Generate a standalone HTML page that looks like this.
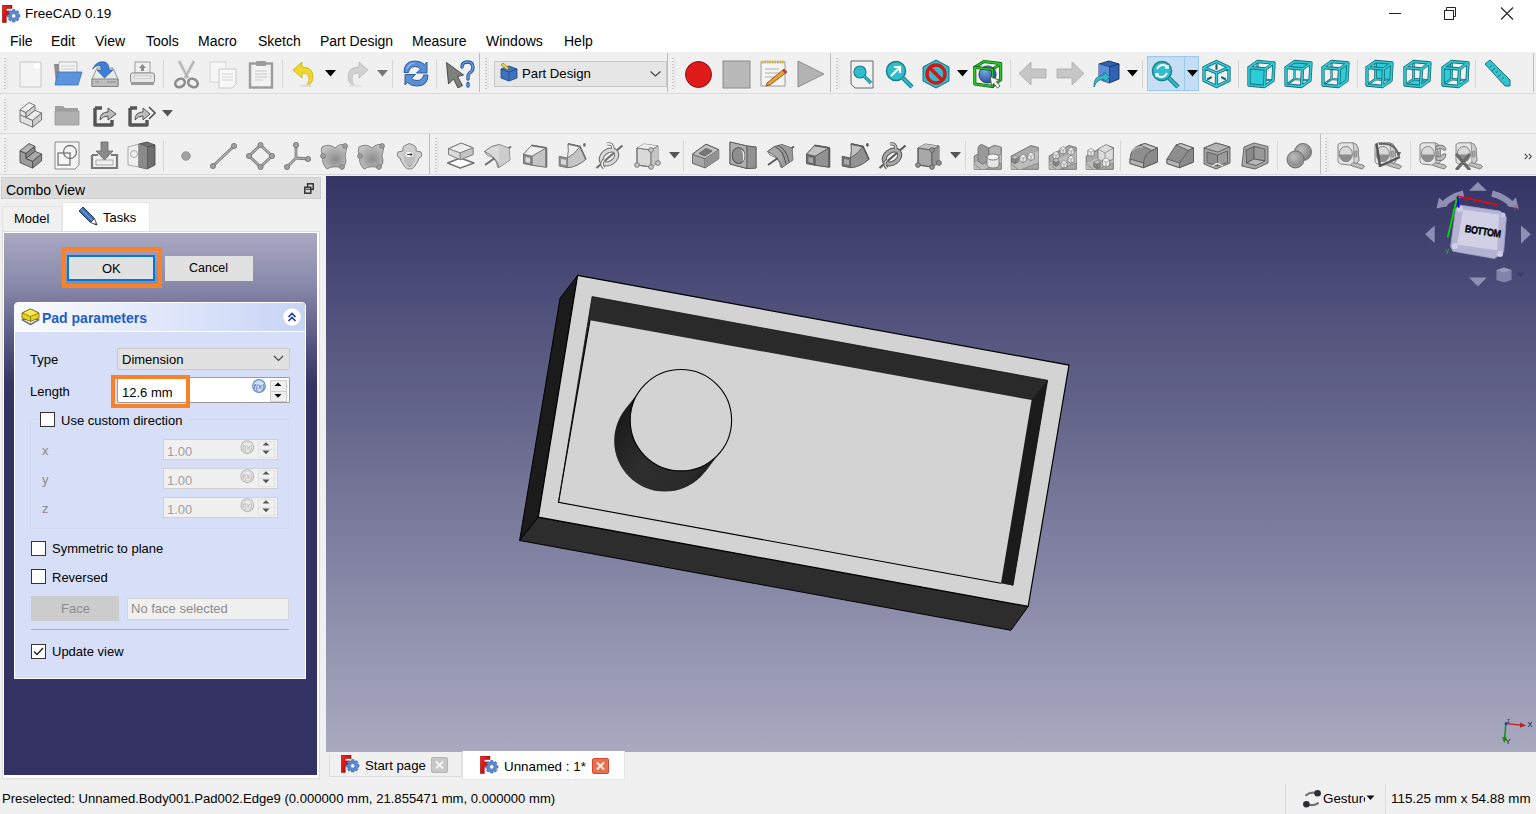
<!DOCTYPE html>
<html><head><meta charset="utf-8">
<style>
*{box-sizing:border-box;margin:0;padding:0}
html,body{width:1536px;height:814px;overflow:hidden;background:#f0f0f0;font-family:"Liberation Sans",sans-serif;color:#000;position:relative}
.a{position:absolute}
.t{position:absolute;white-space:nowrap;line-height:1}
#title{left:0;top:0;width:1536px;height:52px;background:#fff}
#tb{left:0;top:52px;width:1536px;height:123px;background:#f0f0f0}
.tline{position:absolute;left:0;width:1536px;height:1px;background:#dadada}
#view{left:326px;top:176px;width:1210px;height:576px;background:linear-gradient(#353566,#a9aac0)}
#dock{left:0;top:176px;width:322px;height:604px}
</style></head><body>
<div id="title" class="a">
  <div class="t" style="left:25px;top:7.3px;font-size:13.5px">FreeCAD 0.19</div>
  <div class="t" style="left:10px;top:33.7px;font-size:14px">File</div>
  <div class="t" style="left:51px;top:33.7px;font-size:14px">Edit</div>
  <div class="t" style="left:95px;top:33.7px;font-size:14px">View</div>
  <div class="t" style="left:146px;top:33.7px;font-size:14px">Tools</div>
  <div class="t" style="left:198px;top:33.7px;font-size:14px">Macro</div>
  <div class="t" style="left:258px;top:33.7px;font-size:14px">Sketch</div>
  <div class="t" style="left:320px;top:33.7px;font-size:14px">Part Design</div>
  <div class="t" style="left:412px;top:33.7px;font-size:14px">Measure</div>
  <div class="t" style="left:486px;top:33.7px;font-size:14px">Windows</div>
  <div class="t" style="left:564px;top:33.7px;font-size:14px">Help</div>
</div>
<div id="tb" class="a">
  <div class="tline" style="top:41px"></div>
  <div class="tline" style="top:81px"></div>
  <div class="tline" style="top:122px"></div>
</div>
<!--TB-->
<svg class="a" style="left:4px;top:58px" width="4" height="31"><line x1="1" y1="0" x2="1" y2="31" stroke="#9a9a9a" stroke-width="1" stroke-dasharray="1 2"/><line x1="3" y1="1.5" x2="3" y2="31" stroke="#c4c4c4" stroke-width="1" stroke-dasharray="1 2"/></svg>
<svg class="a" style="left:19px;top:61px" width="23" height="27" viewBox="0 0 23 27" preserveAspectRatio="none"><rect x="1" y="1" width="21" height="25" rx="1" fill="#f3f3f3" stroke="#c6c6c6"/><circle cx="18" cy="5" r="3" fill="#fff"/></svg>
<svg class="a" style="left:53px;top:60px" width="30" height="26" viewBox="0 0 30 26" preserveAspectRatio="none"><path d="M1 4 H9 L11 6 H20 V24 H3Z" fill="#8c8c8c"/><path d="M6 2 H24 V20 H6Z" fill="#f4f4f4" stroke="#aaa" stroke-width="0.8"/><path d="M8 6 H22 M8 9 H22" stroke="#ccc"/><path d="M5 12 H29 L25 25 H2Z" fill="#5c93dd" stroke="#3d6fb8" stroke-width="0.8"/></svg>
<svg class="a" style="left:91px;top:60px" width="28" height="28" viewBox="0 0 28 28" preserveAspectRatio="none"><path d="M6 8 H22 L27 19 V26 H1 V19Z" fill="#e9e9e9" stroke="#8a8a8a" stroke-width="0.9"/><path d="M1 19 H27 V26.5 H1Z" fill="#bdbdbd" stroke="#7a7a7a" stroke-width="0.9"/><path d="M16 22 H25 M4 22 H8" stroke="#8a8a8a" stroke-width="1"/><path d="M1.5 9 Q6 0 14 2 Q18 3.5 18 10 H22 L13.5 18 L6 10 H10.5 Q10.5 5.5 7 5.5 Q4 6 1.5 9Z" fill="#3d7ed6" stroke="#24589f" stroke-width="0.7"/></svg>
<svg class="a" style="left:129px;top:60px" width="27" height="27" viewBox="0 0 27 27" preserveAspectRatio="none"><rect x="6" y="2" width="15" height="11" fill="#efefef" stroke="#9c9c9c"/><path d="M13.5 4 L10 8 H12 V11 H15 V8 H17Z" fill="#8e8e8e"/><rect x="1.5" y="13" width="24" height="10" rx="2" fill="#e6e6e6" stroke="#8a8a8a"/><rect x="5" y="16" width="17" height="2" fill="#fff" stroke="#aaa" stroke-width="0.6"/><rect x="2" y="22" width="23" height="3" fill="#9a9a9a"/></svg>
<div class="a" style="left:163px;top:60px;width:1px;height:28px;background:#d6d6d6"></div>
<svg class="a" style="left:173px;top:60px" width="27" height="29" viewBox="0 0 27 29" preserveAspectRatio="none"><path d="M6 1 L15 18 M21 1 L12 18" stroke="#c9c9c9" stroke-width="3"/><path d="M6 1 L15 18 M21 1 L12 18" stroke="#9a9a9a" stroke-width="0.7" fill="none"/><ellipse cx="7" cy="23" rx="5" ry="4" fill="none" stroke="#8c8c8c" stroke-width="2.6" transform="rotate(-30 7 23)"/><ellipse cx="20" cy="23" rx="5" ry="4" fill="none" stroke="#8c8c8c" stroke-width="2.6" transform="rotate(30 20 23)"/></svg>
<svg class="a" style="left:209px;top:60px" width="29" height="29" viewBox="0 0 29 29" preserveAspectRatio="none"><path d="M1 2 H17 V22 H1Z" fill="#f6f6f6" stroke="#d4d4d4"/><path d="M10 9 H27 V24 L23 28 H10Z" fill="#f8f8f8" stroke="#c8c8c8"/><path d="M13 14 H24 M13 17 H24 M13 20 H24" stroke="#d2d2d2"/></svg>
<svg class="a" style="left:248px;top:60px" width="26" height="29" viewBox="0 0 26 29" preserveAspectRatio="none"><rect x="2" y="3.5" width="22" height="24" fill="#f2f2f2" stroke="#9c9c9c" stroke-width="2.4"/><rect x="8" y="1" width="10" height="5" rx="1" fill="#9c9c9c"/><path d="M7 11 H19 M7 14 H19 M7 17 H19 M7 20 H15" stroke="#c8c8c8"/></svg>
<div class="a" style="left:282px;top:60px;width:1px;height:28px;background:#d6d6d6"></div>
<svg class="a" style="left:292px;top:60px" width="24" height="27" viewBox="0 0 24 27" preserveAspectRatio="none"><path d="M1 10 L10 2 V7 Q21 7 21 17 Q21 24 14 26 Q18 22 17 17 Q16 13 10 13 V18Z" fill="#f0d82a" stroke="#c9b110" stroke-width="0.8"/><ellipse cx="14" cy="26" rx="7" ry="1.5" fill="#ddd"/></svg>
<svg class="a" style="left:325px;top:70px" width="11" height="7" viewBox="0 0 11 7" preserveAspectRatio="none"><path d="M0 0 H11 L5.5 6.5Z" fill="#000"/></svg>
<svg class="a" style="left:345px;top:60px" width="24" height="27" viewBox="0 0 24 27" preserveAspectRatio="none"><path d="M23 10 L14 2 V7 Q3 7 3 17 Q3 24 10 26 Q6 22 7 17 Q8 13 14 13 V18Z" fill="#d2d2d2" stroke="#b8b8b8" stroke-width="0.8"/><ellipse cx="10" cy="26" rx="7" ry="1.5" fill="#e2e2e2"/></svg>
<svg class="a" style="left:377px;top:70px" width="11" height="7" viewBox="0 0 11 7" preserveAspectRatio="none"><path d="M0 0 H11 L5.5 6.5Z" fill="#777"/></svg>
<div class="a" style="left:392px;top:60px;width:1px;height:28px;background:#d6d6d6"></div>
<svg class="a" style="left:403px;top:60px" width="26" height="27" viewBox="0 0 26 27" preserveAspectRatio="none"><path d="M1 12.5 Q1 1 12 1 Q18 1 21.5 4.5 L24 2 V13 H13.5 L17.5 9 Q15.5 6.5 12 6.5 Q6.5 6.5 5.5 12.5Z" fill="#5a8fd4" stroke="#22549c" stroke-width="0.9" stroke-linejoin="round"/><path d="M25 15 Q25 26 14 26 Q8 26 4.5 22.5 L2 25 V14.5 H12.5 L8.5 18.5 Q10.5 20.5 14 20.5 Q19.5 20.5 20.5 15Z" fill="#5a8fd4" stroke="#22549c" stroke-width="0.9" stroke-linejoin="round"/><path d="M4 9 Q6 3 12 3" fill="none" stroke="#9cc0ec" stroke-width="1.2"/></svg>
<div class="a" style="left:436px;top:59px;width:1px;height:30px;background:#d6d6d6"></div>
<svg class="a" style="left:445px;top:60px" width="30" height="28" viewBox="0 0 30 28" preserveAspectRatio="none"><path d="M1.5 2.5 L18.5 15 L12.5 16.5 L17.5 25.5 L13 28 L8.5 19 L3.5 24Z" fill="#7e807c" stroke="#3e403c" stroke-width="0.9" stroke-linejoin="round"/><path d="M17 7 Q17 2 22.5 2 Q28 2 28 7.5 Q28 11 24.5 13 Q23 14 23 17 V19" fill="none" stroke="#1f4f9a" stroke-width="3.3" stroke-linecap="round"/><path d="M17 7 Q17 2 22.5 2 Q28 2 28 7.5 Q28 11 24.5 13 Q23 14 23 17 V19" fill="none" stroke="#6a9ad8" stroke-width="1.6" stroke-linecap="round"/><path d="M23 23.5 V26" stroke="#1f4f9a" stroke-width="3.3" stroke-linecap="round"/><path d="M23 23.5 V26" stroke="#6a9ad8" stroke-width="1.5" stroke-linecap="round"/></svg>
<div class="a" style="left:479px;top:53px;width:1px;height:39px;background:#bdbdbd"></div>
<svg class="a" style="left:485px;top:58px" width="4" height="31"><line x1="1" y1="0" x2="1" y2="31" stroke="#9a9a9a" stroke-width="1" stroke-dasharray="1 2"/><line x1="3" y1="1.5" x2="3" y2="31" stroke="#c4c4c4" stroke-width="1" stroke-dasharray="1 2"/></svg>
<div class="a" style="left:494px;top:61px;width:173px;height:26px;background:#e6e6e6;border:1px solid #c7c7c7"></div>
<svg class="a" style="left:499px;top:62px" width="19" height="20" viewBox="0 0 19 20" preserveAspectRatio="none"><path d="M2 7 L10 4 L18 7 V16 L10 19 L2 16Z" fill="#3f73bf" stroke="#20407a" stroke-width="0.8"/><path d="M2 7 L10 10 L18 7" fill="none" stroke="#20407a" stroke-width="0.8"/><path d="M10 10 V19" stroke="#20407a" stroke-width="0.6"/><path d="M4 1 L10 6 L8 8 L2 3Z" fill="#e8d04a" stroke="#7a6a20" stroke-width="0.6"/></svg>
<div class="t" style="left:522px;top:67px;font-size:13.2px">Part Design</div>
<svg class="a" style="left:650px;top:71px" width="11" height="6" viewBox="0 0 11 6" preserveAspectRatio="none"><path d="M0.5 0.5 L5.5 5 L10.5 0.5" fill="none" stroke="#444" stroke-width="1.1"/></svg>
<div class="a" style="left:667px;top:53px;width:1px;height:39px;background:#bdbdbd"></div>
<svg class="a" style="left:672px;top:58px" width="4" height="31"><line x1="1" y1="0" x2="1" y2="31" stroke="#9a9a9a" stroke-width="1" stroke-dasharray="1 2"/><line x1="3" y1="1.5" x2="3" y2="31" stroke="#c4c4c4" stroke-width="1" stroke-dasharray="1 2"/></svg>
<svg class="a" style="left:684px;top:60px" width="29" height="29" viewBox="0 0 29 29" preserveAspectRatio="none"><circle cx="14.5" cy="14.5" r="13" fill="#e01b1b" stroke="#8a0a0a" stroke-width="1"/></svg>
<svg class="a" style="left:722px;top:60px" width="29" height="29" viewBox="0 0 29 29" preserveAspectRatio="none"><rect x="1" y="1" width="27" height="27" fill="#b9b9b9" stroke="#8a8a8a" stroke-width="1"/></svg>
<svg class="a" style="left:759px;top:59px" width="29" height="29" viewBox="0 0 29 29" preserveAspectRatio="none"><rect x="2" y="3" width="24" height="24" fill="#f4f4f4" stroke="#9a9a9a"/><path d="M3 3 H25" stroke="#c9b24a" stroke-width="3" stroke-dasharray="1.5 1"/><path d="M6 10 H20 M6 14 H20 M6 18 H16" stroke="#b0b0b0"/><path d="M8 24 L25 10 L28 13 L11 26 L7 27Z" fill="#e8a030" stroke="#7a4a10" stroke-width="0.8"/><path d="M24 11 L27 14" stroke="#d03030" stroke-width="2"/></svg>
<svg class="a" style="left:797px;top:60px" width="28" height="28" viewBox="0 0 28 28" preserveAspectRatio="none"><path d="M1 1 L27 14 L1 27Z" fill="#b3b3b3" stroke="#8c8c8c" stroke-width="1"/></svg>
<div class="a" style="left:830px;top:53px;width:1px;height:39px;background:#bdbdbd"></div>
<svg class="a" style="left:836px;top:58px" width="4" height="31"><line x1="1" y1="0" x2="1" y2="31" stroke="#9a9a9a" stroke-width="1" stroke-dasharray="1 2"/><line x1="3" y1="1.5" x2="3" y2="31" stroke="#c4c4c4" stroke-width="1" stroke-dasharray="1 2"/></svg>
<svg class="a" style="left:850px;top:60px" width="25" height="30" viewBox="0 0 25 30" preserveAspectRatio="none"><path d="M1 1 H23 V28 H5 L1 24Z" fill="#f2f2f2" stroke="#555" stroke-width="0.9"/><circle cx="10" cy="12" r="6" fill="#2fbccd" stroke="#1a7f8c" stroke-width="1.2"/><path d="M14 16 L21 23" stroke="#1a7f8c" stroke-width="3.2"/><path d="M14 16 L21 23" stroke="#2fbccd" stroke-width="1.6"/></svg>
<svg class="a" style="left:885px;top:60px" width="29" height="29" viewBox="0 0 29 29" preserveAspectRatio="none"><circle cx="11" cy="11" r="9.5" fill="#2fbccd" stroke="#1a7f8c" stroke-width="1.5"/><path d="M18 18 L27 27" stroke="#1a7f8c" stroke-width="4.5"/><path d="M18 18 L27 27" stroke="#2fbccd" stroke-width="2.2"/><path d="M6 16 L14 8 M9 7 H15 V13" fill="none" stroke="#fff" stroke-width="2.2"/></svg>
<svg class="a" style="left:921px;top:59px" width="30" height="30" viewBox="0 0 30 30" preserveAspectRatio="none"><path d="M15 1 L28 8 V22 L15 29 L2 22 V8Z" fill="#2fbccd" stroke="#1a6f7c" stroke-width="1"/><circle cx="15" cy="15" r="9" fill="none" stroke="#d01818" stroke-width="3.4"/><path d="M9 9 L21 21" stroke="#d01818" stroke-width="3.4"/></svg>
<svg class="a" style="left:957px;top:70px" width="11" height="7" viewBox="0 0 11 7" preserveAspectRatio="none"><path d="M0 0 H11 L5.5 6.5Z" fill="#000"/></svg>
<svg class="a" style="left:973px;top:59px" width="30" height="31" viewBox="0 0 30 31" preserveAspectRatio="none"><path d="M1.8 8.3 L10.9 2.4 L27.7 4.6 L27.7 20.5 L19.5 27.4 M19.5 10.5 L27.7 4.6" fill="none" stroke-linejoin="round" stroke-linecap="round" stroke="#0a4a0a" stroke-width="3"/><path d="M1.8 8.3 L10.9 2.4 L27.7 4.6 L27.7 20.5 L19.5 27.4 M19.5 10.5 L27.7 4.6" fill="none" stroke-linejoin="round" stroke-linecap="round" stroke="#22cc22" stroke-width="1.7"/><defs><radialGradient id="bsph" cx="0.35" cy="0.3" r="0.75"><stop offset="0" stop-color="#7aa6e0"/><stop offset="1" stop-color="#1f4f9a"/></radialGradient></defs><circle cx="14.5" cy="15.5" r="8.6" fill="url(#bsph)" stroke="#1a2a4a" stroke-width="0.8"/><path d="M1.8 8.3 L19.5 10.5 L19.5 27.4 L1.8 25.1Z" fill="none" stroke-linejoin="round" stroke-linecap="round" stroke="#0a4a0a" stroke-width="3"/><path d="M1.8 8.3 L19.5 10.5 L19.5 27.4 L1.8 25.1Z" fill="none" stroke-linejoin="round" stroke-linecap="round" stroke="#22cc22" stroke-width="1.7"/><path d="M17.3 17.4 L18.5 27 L20.8 24.5 L24.5 29 L27 27 L23.3 22.6 L26.5 21.5Z" fill="#f6f6f6" stroke="#444" stroke-width="0.8" stroke-linejoin="round"/></svg>
<div class="a" style="left:1010px;top:60px;width:1px;height:28px;background:#d6d6d6"></div>
<svg class="a" style="left:1018px;top:61px" width="30" height="25" viewBox="0 0 30 25" preserveAspectRatio="none"><path d="M1 12.5 L13 1 V8 H28 V17 H13 V24Z" fill="#c6c6c6" stroke="#aaa" stroke-width="0.8"/></svg>
<svg class="a" style="left:1055px;top:61px" width="30" height="25" viewBox="0 0 30 25" preserveAspectRatio="none"><path d="M29 12.5 L17 1 V8 H2 V17 H17 V24Z" fill="#c6c6c6" stroke="#aaa" stroke-width="0.8"/></svg>
<svg class="a" style="left:1091px;top:59px" width="30" height="30" viewBox="0 0 30 30" preserveAspectRatio="none"><path d="M8 5 L18 2 L28 5 V20 L18 24 L8 20Z" fill="#2f63b0" stroke="#102a5a" stroke-width="0.9"/><path d="M8 5 L18 8 L28 5 M18 8 V24" fill="none" stroke="#102a5a" stroke-width="0.8"/><path d="M8 5 L18 8 V24 L8 20Z" fill="#5a8fd8"/><path d="M3 28 Q2 17 13 16 V13 L19 18 L13 23 V20 Q6 20 3 28Z" fill="#2fbccd" stroke="#1a6f7c" stroke-width="0.8"/></svg>
<svg class="a" style="left:1127px;top:70px" width="11" height="7" viewBox="0 0 11 7" preserveAspectRatio="none"><path d="M0 0 H11 L5.5 6.5Z" fill="#000"/></svg>
<div class="a" style="left:1142px;top:60px;width:1px;height:28px;background:#d6d6d6"></div>
<div class="a" style="left:1147px;top:56px;width:52px;height:35px;background:#c6def4;border:1px solid #99c9ef"></div>
<div class="a" style="left:1184px;top:57px;width:1px;height:33px;background:#99c9ef"></div>
<svg class="a" style="left:1151px;top:60px" width="30" height="29" viewBox="0 0 30 29" preserveAspectRatio="none"><circle cx="11" cy="11" r="9.5" fill="#2fbccd" stroke="#1a7f8c" stroke-width="1.5"/><path d="M18 18 L27 27" stroke="#1a7f8c" stroke-width="4.5"/><path d="M18 18 L27 27" stroke="#2fbccd" stroke-width="2.2"/><path d="M6 9 Q8 5 12 5 Q15 5 16 7 M16 13 Q14 17 10 17 Q7 17 6 15" fill="none" stroke="#fff" stroke-width="1.8"/><path d="M14 8 H17 V5 M8 14 H5 V17" fill="none" stroke="#fff" stroke-width="1.4"/></svg>
<svg class="a" style="left:1187px;top:70px" width="11" height="7" viewBox="0 0 11 7" preserveAspectRatio="none"><path d="M0 0 H11 L5.5 6.5Z" fill="#000"/></svg>
<svg class="a" style="left:1202px;top:59px" width="29" height="30" viewBox="0 0 29 30" preserveAspectRatio="none"><path d="M14.5,2.5 L27,8.5 L27,21.5 L14.5,27.5 L2,21.5 L2,8.5Z M14.5,14 L2,8.5 M14.5,14 L27,8.5 M14.5,14 L14.5,27.5" fill="none" stroke="#1a6a74" stroke-width="3.3" stroke-linejoin="round" stroke-linecap="round"/><path d="M14.5,2.5 L27,8.5 L27,21.5 L14.5,27.5 L2,21.5 L2,8.5Z M14.5,14 L2,8.5 M14.5,14 L27,8.5 M14.5,14 L14.5,27.5" fill="none" stroke="#2ccdd9" stroke-width="1.7" stroke-linejoin="round" stroke-linecap="round"/><path d="M14.5 6 V10 M6 20 L9 18.5 M23 20 L20 18.5" stroke="#1a6a74" stroke-width="2.2" stroke-linecap="round"/></svg>
<div class="a" style="left:1238px;top:60px;width:1px;height:28px;background:#d6d6d6"></div>
<svg class="a" style="left:1247px;top:59px" width="29" height="30" viewBox="0 0 29 30" preserveAspectRatio="none"><path d="M10.5,2.5 L10.5,20 L26.0,21.5 M10.5,20 L2,26" fill="none" stroke="#1a6a74" stroke-width="2.2" stroke-linejoin="round" stroke-linecap="round"/><path d="M10.5,2.5 L10.5,20 L26.0,21.5 M10.5,20 L2,26" fill="none" stroke="#2ccdd9" stroke-width="0.9" stroke-linejoin="round" stroke-linecap="round"/><polygon points="2,8.5 18.5,10 17.5,27.5 2,26" fill="#2ccdd9" stroke="#1a6a74" stroke-width="1.2"/><path d="M2,8.5 L18.5,10 L17.5,27.5 L2,26Z M2,8.5 L10.5,2.5 L27.0,4 L18.5,10 M27.0,4 L26.0,21.5 L17.5,27.5" fill="none" stroke="#1a6a74" stroke-width="3.3" stroke-linejoin="round" stroke-linecap="round"/><path d="M2,8.5 L18.5,10 L17.5,27.5 L2,26Z M2,8.5 L10.5,2.5 L27.0,4 L18.5,10 M27.0,4 L26.0,21.5 L17.5,27.5" fill="none" stroke="#2ccdd9" stroke-width="1.7" stroke-linejoin="round" stroke-linecap="round"/></svg>
<svg class="a" style="left:1284px;top:59px" width="29" height="30" viewBox="0 0 29 30" preserveAspectRatio="none"><path d="M10.5,2.5 L10.5,20 L26.0,21.5 M10.5,20 L2,26" fill="none" stroke="#1a6a74" stroke-width="2.2" stroke-linejoin="round" stroke-linecap="round"/><path d="M10.5,2.5 L10.5,20 L26.0,21.5 M10.5,20 L2,26" fill="none" stroke="#2ccdd9" stroke-width="0.9" stroke-linejoin="round" stroke-linecap="round"/><polygon points="2,8.5 10.5,2.5 27.0,4 18.5,10" fill="#2ccdd9" stroke="#1a6a74" stroke-width="1.2"/><path d="M2,8.5 L18.5,10 L17.5,27.5 L2,26Z M2,8.5 L10.5,2.5 L27.0,4 L18.5,10 M27.0,4 L26.0,21.5 L17.5,27.5" fill="none" stroke="#1a6a74" stroke-width="3.3" stroke-linejoin="round" stroke-linecap="round"/><path d="M2,8.5 L18.5,10 L17.5,27.5 L2,26Z M2,8.5 L10.5,2.5 L27.0,4 L18.5,10 M27.0,4 L26.0,21.5 L17.5,27.5" fill="none" stroke="#2ccdd9" stroke-width="1.7" stroke-linejoin="round" stroke-linecap="round"/></svg>
<svg class="a" style="left:1321px;top:59px" width="29" height="30" viewBox="0 0 29 30" preserveAspectRatio="none"><path d="M10.5,2.5 L10.5,20 L26.0,21.5 M10.5,20 L2,26" fill="none" stroke="#1a6a74" stroke-width="2.2" stroke-linejoin="round" stroke-linecap="round"/><path d="M10.5,2.5 L10.5,20 L26.0,21.5 M10.5,20 L2,26" fill="none" stroke="#2ccdd9" stroke-width="0.9" stroke-linejoin="round" stroke-linecap="round"/><polygon points="18.5,10 27.0,4 26.0,21.5 17.5,27.5" fill="#2ccdd9" stroke="#1a6a74" stroke-width="1.2"/><path d="M2,8.5 L18.5,10 L17.5,27.5 L2,26Z M2,8.5 L10.5,2.5 L27.0,4 L18.5,10 M27.0,4 L26.0,21.5 L17.5,27.5" fill="none" stroke="#1a6a74" stroke-width="3.3" stroke-linejoin="round" stroke-linecap="round"/><path d="M2,8.5 L18.5,10 L17.5,27.5 L2,26Z M2,8.5 L10.5,2.5 L27.0,4 L18.5,10 M27.0,4 L26.0,21.5 L17.5,27.5" fill="none" stroke="#2ccdd9" stroke-width="1.7" stroke-linejoin="round" stroke-linecap="round"/></svg>
<div class="a" style="left:1357px;top:60px;width:1px;height:28px;background:#d6d6d6"></div>
<svg class="a" style="left:1365px;top:59px" width="29" height="30" viewBox="0 0 29 30" preserveAspectRatio="none"><polygon points="10.5,2.5 27.0,4 26.0,21.5 10.5,20" fill="#2ccdd9" stroke="#1a6a74" stroke-width="0.8"/><path d="M10.5,2.5 L10.5,20 L26.0,21.5 M10.5,20 L2,26" fill="none" stroke="#1a6a74" stroke-width="2.6" stroke-linejoin="round" stroke-linecap="round"/><path d="M10.5,2.5 L10.5,20 L26.0,21.5 M10.5,20 L2,26" fill="none" stroke="#2ccdd9" stroke-width="1.2" stroke-linejoin="round" stroke-linecap="round"/><path d="M2,8.5 L18.5,10 L17.5,27.5 L2,26Z M2,8.5 L10.5,2.5 L27.0,4 L18.5,10 M27.0,4 L26.0,21.5 L17.5,27.5" fill="none" stroke="#1a6a74" stroke-width="3.3" stroke-linejoin="round" stroke-linecap="round"/><path d="M2,8.5 L18.5,10 L17.5,27.5 L2,26Z M2,8.5 L10.5,2.5 L27.0,4 L18.5,10 M27.0,4 L26.0,21.5 L17.5,27.5" fill="none" stroke="#2ccdd9" stroke-width="1.7" stroke-linejoin="round" stroke-linecap="round"/></svg>
<svg class="a" style="left:1403px;top:59px" width="29" height="30" viewBox="0 0 29 30" preserveAspectRatio="none"><polygon points="2,26 17.5,27.5 26.0,21.5 10.5,20" fill="#2ccdd9" stroke="#1a6a74" stroke-width="0.8"/><path d="M10.5,2.5 L10.5,20 L26.0,21.5 M10.5,20 L2,26" fill="none" stroke="#1a6a74" stroke-width="2.6" stroke-linejoin="round" stroke-linecap="round"/><path d="M10.5,2.5 L10.5,20 L26.0,21.5 M10.5,20 L2,26" fill="none" stroke="#2ccdd9" stroke-width="1.2" stroke-linejoin="round" stroke-linecap="round"/><path d="M2,8.5 L18.5,10 L17.5,27.5 L2,26Z M2,8.5 L10.5,2.5 L27.0,4 L18.5,10 M27.0,4 L26.0,21.5 L17.5,27.5" fill="none" stroke="#1a6a74" stroke-width="3.3" stroke-linejoin="round" stroke-linecap="round"/><path d="M2,8.5 L18.5,10 L17.5,27.5 L2,26Z M2,8.5 L10.5,2.5 L27.0,4 L18.5,10 M27.0,4 L26.0,21.5 L17.5,27.5" fill="none" stroke="#2ccdd9" stroke-width="1.7" stroke-linejoin="round" stroke-linecap="round"/></svg>
<svg class="a" style="left:1441px;top:59px" width="29" height="30" viewBox="0 0 29 30" preserveAspectRatio="none"><polygon points="2,8.5 10.5,2.5 10.5,20 2,26" fill="#2ccdd9" stroke="#1a6a74" stroke-width="0.8"/><path d="M10.5,2.5 L10.5,20 L26.0,21.5 M10.5,20 L2,26" fill="none" stroke="#1a6a74" stroke-width="2.6" stroke-linejoin="round" stroke-linecap="round"/><path d="M10.5,2.5 L10.5,20 L26.0,21.5 M10.5,20 L2,26" fill="none" stroke="#2ccdd9" stroke-width="1.2" stroke-linejoin="round" stroke-linecap="round"/><path d="M2,8.5 L18.5,10 L17.5,27.5 L2,26Z M2,8.5 L10.5,2.5 L27.0,4 L18.5,10 M27.0,4 L26.0,21.5 L17.5,27.5" fill="none" stroke="#1a6a74" stroke-width="3.3" stroke-linejoin="round" stroke-linecap="round"/><path d="M2,8.5 L18.5,10 L17.5,27.5 L2,26Z M2,8.5 L10.5,2.5 L27.0,4 L18.5,10 M27.0,4 L26.0,21.5 L17.5,27.5" fill="none" stroke="#2ccdd9" stroke-width="1.7" stroke-linejoin="round" stroke-linecap="round"/></svg>
<div class="a" style="left:1475px;top:60px;width:1px;height:28px;background:#d6d6d6"></div>
<svg class="a" style="left:1484px;top:59px" width="27" height="29" viewBox="0 0 27 29" preserveAspectRatio="none"><path d="M1 5 L6 1 L26 21 L26 27 L21 27Z" fill="#2fc4d2" stroke="#1a6f7c" stroke-width="1"/><path d="M8 6 L6 8 M11 9 L8 12 M14 12 L12 14 M17 15 L14 18 M20 18 L18 20" stroke="#1a6f7c" stroke-width="1"/></svg>
<div class="a" style="left:1533px;top:53px;width:1px;height:39px;background:#bdbdbd"></div>
<svg class="a" style="left:4px;top:99px" width="4" height="31"><line x1="1" y1="0" x2="1" y2="31" stroke="#9a9a9a" stroke-width="1" stroke-dasharray="1 2"/><line x1="3" y1="1.5" x2="3" y2="31" stroke="#c4c4c4" stroke-width="1" stroke-dasharray="1 2"/></svg>
<svg class="a" style="left:19px;top:102px" width="24" height="26" viewBox="0 0 24 26" preserveAspectRatio="none"><path d="M1 7.8 L7 10.5 L7 15.5 L13.6 18.3 L13.6 25.1 L1 19.6Z" fill="#e2e2e2" stroke="#6a6a6a" stroke-width="0.9" stroke-linejoin="round"/><path d="M1 7.8 L10 0.6 L16 3.3 L7 10.5Z" fill="#f2f2f2" stroke="#6a6a6a" stroke-width="0.9" stroke-linejoin="round"/><path d="M7 10.5 L16 3.3 L16 8.3 L7 15.5Z" fill="#d2d2d2" stroke="#6a6a6a" stroke-width="0.9" stroke-linejoin="round"/><path d="M7 15.5 L16 8.3 L22.6 11.1 L13.6 18.3Z" fill="#ececec" stroke="#6a6a6a" stroke-width="0.9" stroke-linejoin="round"/><path d="M13.6 18.3 L22.6 11.1 L22.6 17.9 L13.6 25.1Z" fill="#cdcdcd" stroke="#6a6a6a" stroke-width="0.9" stroke-linejoin="round"/><path d="M1 12.8 L7 15.5" stroke="#6a6a6a" stroke-width="0.9" stroke-linejoin="round"/></svg>
<svg class="a" style="left:54px;top:103px" width="26" height="23" viewBox="0 0 26 23" preserveAspectRatio="none"><path d="M1 3 H9 L11 5 H24 V21 H1Z" fill="#9f9f9f"/><path d="M1 8 H25 V22 H1Z" fill="#b0b0b0" stroke="#9a9a9a" stroke-width="0.8"/></svg>
<svg class="a" style="left:92px;top:103px" width="26" height="24" viewBox="0 0 26 24" preserveAspectRatio="none"><path d="M3 5 H10 M3 5 V22 H20 V17" fill="none" stroke="#555" stroke-width="3.4" stroke-linejoin="round"/><path d="M8 17 Q8 9 16 9 V5 L24 11 L16 17 V13 Q11 13 8 17Z" fill="#bdbdbd" stroke="#555" stroke-width="1"/></svg>
<svg class="a" style="left:127px;top:103px" width="29" height="24" viewBox="0 0 29 24" preserveAspectRatio="none"><path d="M3 5 H10 M3 5 V22 H20 V17" fill="none" stroke="#555" stroke-width="3.4" stroke-linejoin="round"/><path d="M8 17 Q8 9 16 9 V5 L23 11 L16 17 V13 Q11 13 8 17Z" fill="#bdbdbd" stroke="#555" stroke-width="1"/><path d="M22 4 L28 10 L22 16" fill="none" stroke="#555" stroke-width="1.6"/></svg>
<svg class="a" style="left:162px;top:110px" width="11" height="7" viewBox="0 0 11 7" preserveAspectRatio="none"><path d="M0 0 H11 L5.5 6.5Z" fill="#555"/></svg>
<div class="a" style="left:0px;top:93px;width:1px;height:1px;background:#bdbdbd"></div>
<svg class="a" style="left:4px;top:138px" width="4" height="34"><line x1="1" y1="0" x2="1" y2="34" stroke="#9a9a9a" stroke-width="1" stroke-dasharray="1 2"/><line x1="3" y1="1.5" x2="3" y2="34" stroke="#c4c4c4" stroke-width="1" stroke-dasharray="1 2"/></svg>
<svg class="a" style="left:19px;top:143px" width="24" height="26" viewBox="0 0 24 26" preserveAspectRatio="none"><path d="M1 7.8 L7 10.5 L7 15.5 L13.6 18.3 L13.6 25.1 L1 19.6Z" fill="#9c9c9c" stroke="#4a4a4a" stroke-width="0.9" stroke-linejoin="round"/><path d="M1 7.8 L10 0.6 L16 3.3 L7 10.5Z" fill="#b4b4b4" stroke="#4a4a4a" stroke-width="0.9" stroke-linejoin="round"/><path d="M7 10.5 L16 3.3 L16 8.3 L7 15.5Z" fill="#8a8a8a" stroke="#4a4a4a" stroke-width="0.9" stroke-linejoin="round"/><path d="M7 15.5 L16 8.3 L22.6 11.1 L13.6 18.3Z" fill="#a8a8a8" stroke="#4a4a4a" stroke-width="0.9" stroke-linejoin="round"/><path d="M13.6 18.3 L22.6 11.1 L22.6 17.9 L13.6 25.1Z" fill="#8e8e8e" stroke="#4a4a4a" stroke-width="0.9" stroke-linejoin="round"/></svg>
<svg class="a" style="left:54px;top:141px" width="26" height="29" viewBox="0 0 26 29" preserveAspectRatio="none"><path d="M1 1 H25 V24 L21 28 H1Z" fill="#f5f5f5" stroke="#8a8a8a"/><rect x="4" y="12" width="12" height="12" fill="none" stroke="#777" stroke-width="1.3"/><circle cx="16" cy="11" r="6.5" fill="none" stroke="#777" stroke-width="1.3"/></svg>
<svg class="a" style="left:90px;top:141px" width="29" height="29" viewBox="0 0 29 29" preserveAspectRatio="none"><path d="M2 14 H8 M21 14 H27 V27 H2 V14" fill="none" stroke="#7a7a7a" stroke-width="2.2"/><path d="M6 19 H23 V24 H6Z" fill="none" stroke="#aaa" stroke-width="1"/><path d="M11 1 H18 V10 H23 L14.5 19 L6 10 H11Z" fill="#8a8a8a" stroke="#666" stroke-width="0.8"/></svg>
<svg class="a" style="left:127px;top:141px" width="29" height="29" viewBox="0 0 29 29" preserveAspectRatio="none"><path d="M1 6 L12 3 V26 L1 24Z" fill="#f0f0f0" stroke="#999" stroke-width="0.8"/><path d="M12 3 L20 1 L28 4 V24 L20 28 L12 26Z" fill="#6e6e6e" stroke="#444" stroke-width="0.8"/><path d="M12 3 L20 6 L28 4 M20 6 V28" fill="none" stroke="#444" stroke-width="0.7"/><path d="M12 3 L20 6 V28 L12 26Z" fill="#8a8a8a"/><circle cx="7" cy="13" r="3.5" fill="none" stroke="#aaa"/></svg>
<div class="a" style="left:163px;top:141px;width:1px;height:30px;background:#d6d6d6"></div>
<svg class="a" style="left:181px;top:151px" width="10" height="10" viewBox="0 0 10 10" preserveAspectRatio="none"><circle cx="5" cy="5" r="4.3" fill="#a2a2a2" stroke="#8a8a8a" stroke-width="0.8"/></svg>
<svg class="a" style="left:209px;top:142px" width="29" height="28" viewBox="0 0 29 28" preserveAspectRatio="none"><path d="M4 24 L25 4" fill="none" stroke="#7a7a7a" stroke-width="2.8" stroke-linejoin="round"/><path d="M4 24 L25 4" fill="none" stroke="#b4b4b4" stroke-width="1.1" stroke-linejoin="round"/><circle cx="4" cy="24" r="2.6" fill="#a0a0a0" stroke="#7a7a7a" stroke-width="0.9"/><circle cx="25" cy="4" r="2.6" fill="#a0a0a0" stroke="#7a7a7a" stroke-width="0.9"/></svg>
<svg class="a" style="left:246px;top:142px" width="29" height="28" viewBox="0 0 29 28" preserveAspectRatio="none"><path d="M14.5 3 L26 14 L14.5 25 L3 14Z" fill="none" stroke="#7a7a7a" stroke-width="2.8" stroke-linejoin="round"/><path d="M14.5 3 L26 14 L14.5 25 L3 14Z" fill="none" stroke="#b4b4b4" stroke-width="1.1" stroke-linejoin="round"/><circle cx="14.5" cy="3" r="2.6" fill="#a0a0a0" stroke="#7a7a7a" stroke-width="0.9"/><circle cx="26" cy="14" r="2.6" fill="#a0a0a0" stroke="#7a7a7a" stroke-width="0.9"/><circle cx="14.5" cy="25" r="2.6" fill="#a0a0a0" stroke="#7a7a7a" stroke-width="0.9"/><circle cx="3" cy="14" r="2.6" fill="#a0a0a0" stroke="#7a7a7a" stroke-width="0.9"/></svg>
<svg class="a" style="left:284px;top:142px" width="27" height="28" viewBox="0 0 27 28" preserveAspectRatio="none"><path d="M12 3 V16 L3 25 M12 16 L24 17" fill="none" stroke="#7a7a7a" stroke-width="2.8" stroke-linejoin="round"/><path d="M12 3 V16 L3 25 M12 16 L24 17" fill="none" stroke="#b4b4b4" stroke-width="1.1" stroke-linejoin="round"/><circle cx="12" cy="3" r="2.6" fill="#a0a0a0" stroke="#7a7a7a" stroke-width="0.9"/><circle cx="3" cy="25" r="2.6" fill="#a0a0a0" stroke="#7a7a7a" stroke-width="0.9"/><circle cx="24" cy="17" r="2.6" fill="#a0a0a0" stroke="#7a7a7a" stroke-width="0.9"/></svg>
<svg class="a" style="left:320px;top:142px" width="30" height="29" viewBox="0 0 30 29" preserveAspectRatio="none"><defs><radialGradient id="bg1" cx="0.55" cy="0.6" r="0.6"><stop offset="0" stop-color="#8c8c8c"/><stop offset="1" stop-color="#c4c4c4"/></radialGradient></defs><path d="M2 5 Q9 1 15 6 Q21 0 27 4 L25 14 Q28 22 22 26 Q14 23 7 27 Q1 21 3 14 Q0 9 2 5Z" fill="url(#bg1)" stroke="#7a7a7a" stroke-width="0.9"/><circle cx="25" cy="4" r="2.4" fill="#a0a0a0" stroke="#7a7a7a" stroke-width="0.9"/><circle cx="3" cy="14" r="2.4" fill="#a0a0a0" stroke="#7a7a7a" stroke-width="0.9"/><circle cx="22" cy="25" r="2.4" fill="#a0a0a0" stroke="#7a7a7a" stroke-width="0.9"/></svg>
<svg class="a" style="left:357px;top:142px" width="30" height="29" viewBox="0 0 30 29" preserveAspectRatio="none"><defs><radialGradient id="bg2" cx="0.55" cy="0.6" r="0.6"><stop offset="0" stop-color="#8c8c8c"/><stop offset="1" stop-color="#c4c4c4"/></radialGradient></defs><path d="M2 5 Q9 1 15 6 Q21 0 27 4 L25 14 Q28 22 22 26 Q14 23 7 27 Q1 21 3 14 Q0 9 2 5Z" fill="url(#bg2)" stroke="#7a7a7a" stroke-width="0.9"/><circle cx="25" cy="4" r="2.4" fill="#a0a0a0" stroke="#7a7a7a" stroke-width="0.9"/><circle cx="3" cy="14" r="2.4" fill="#a0a0a0" stroke="#7a7a7a" stroke-width="0.9"/><circle cx="22" cy="25" r="2.4" fill="#a0a0a0" stroke="#7a7a7a" stroke-width="0.9"/></svg>
<svg class="a" style="left:395px;top:142px" width="29" height="29" viewBox="0 0 29 29" preserveAspectRatio="none"><path d="M3 10 L8 9 Q7 4 11 3 Q14 0 18 3 Q22 4 21 9 L26 10 Q28 15 24 16 Q23 20 21 22 Q19 27 14.5 27 Q10 27 8 22 Q6 20 5 16 Q1 15 3 10Z" fill="#cfcfcf" stroke="#7a7a7a" stroke-width="0.9"/><path d="M9 11 Q14.5 8 20 11 Q21 18 18 22 Q14.5 26 11 22 Q8 18 9 11Z" fill="#bdbdbd"/><ellipse cx="14.5" cy="12.5" rx="4" ry="2.4" fill="#fff"/><path d="M12 12.5 H17 M15.5 11 L17 12.5 L15.5 14" fill="none" stroke="#333" stroke-width="1"/><path d="M12.5 23 L14.5 24.5 L16.5 23" fill="none" stroke="#888" stroke-width="0.8"/></svg>
<div class="a" style="left:429px;top:134px;width:1px;height:40px;background:#bdbdbd"></div>
<svg class="a" style="left:435px;top:138px" width="4" height="34"><line x1="1" y1="0" x2="1" y2="34" stroke="#9a9a9a" stroke-width="1" stroke-dasharray="1 2"/><line x1="3" y1="1.5" x2="3" y2="34" stroke="#c4c4c4" stroke-width="1" stroke-dasharray="1 2"/></svg>
<svg class="a" style="left:447px;top:142px" width="28" height="27" viewBox="0 0 28 27" preserveAspectRatio="none"><path d="M0.6 21 L13.3 16 L26.9 21 L13.3 26.2Z" fill="none" stroke="#707070" stroke-width="1.4" stroke-linejoin="round"/><path d="M4 21 L13.3 17.6 L23.5 21 L13.3 24.6Z" fill="#fff"/><path d="M1.5 6.7 L14.2 1.1 L26 5.8 V12.6 L13.3 17.7 L1.5 12.6Z" fill="#dadada" stroke="#707070" stroke-width="0.9" stroke-linejoin="round"/><path d="M1.5 6.7 L14.2 1.1 L26 5.8 L13.3 10.9Z" fill="#efefef" stroke="#707070" stroke-width="0.9" stroke-linejoin="round"/><path d="M13.3 10.9 V17.7" stroke="#707070" stroke-width="0.9" stroke-linejoin="round"/><path d="M13.3 10.9 L26 5.8 V12.6 L13.3 17.7Z" fill="#c4c4c4" stroke="#707070" stroke-width="0.6" stroke-linejoin="round"/></svg>
<svg class="a" style="left:483px;top:142px" width="29" height="27" viewBox="0 0 29 27" preserveAspectRatio="none"><path d="M2 23 L28 4.5" stroke="#707070" stroke-width="2"/><path d="M1.5 9.5 Q8 3 16 2.5 L26 6 L27 18 L16 25.5 Q14 15 1.5 9.5Z" fill="#dadada" stroke="#707070" stroke-width="0.9" stroke-linejoin="round"/><path d="M16 2.5 L26 6 L27 18 L16 25.5 Q16 10 16 2.5Z" fill="#c4c4c4" opacity="0.6"/><path d="M1.5 9.5 L4 13 Q14 16 14.5 25 L16 25.5" fill="none" stroke="#707070" stroke-width="0.8" stroke-linejoin="round"/></svg>
<svg class="a" style="left:521px;top:142px" width="27" height="28" viewBox="0 0 27 28" preserveAspectRatio="none"><path d="M2.5 12.3 L10.5 3.4 L25.3 5.9 V25.2 L11 23.2 L2.5 21.5Z" fill="#dadada" stroke="#707070" stroke-width="0.9" stroke-linejoin="round"/><path d="M2.5 12.3 L10.5 3.4 L25.3 5.9 L11 14.3Z" fill="#efefef" stroke="#707070" stroke-width="0.8" stroke-linejoin="round"/><path d="M11 14.3 L25.3 5.9 V25.2 L11 23.2Z" fill="#c4c4c4" stroke="#707070" stroke-width="0.8" stroke-linejoin="round"/><path d="M2.5 12.3 L11 14.3 V23.2 L2.5 21.5Z" fill="#707070" opacity="0.75" stroke="#707070" stroke-width="0.8" stroke-linejoin="round"/><path d="M4.5 15 L9 16 V21 L4.5 20Z" fill="#dadada"/><path d="M25.3 5.9 V25.2" stroke="#707070" stroke-width="2"/><path d="M10.5 3.4 L25.3 5.9" stroke="#707070" stroke-width="1.6"/></svg>
<svg class="a" style="left:558px;top:142px" width="29" height="28" viewBox="0 0 29 28" preserveAspectRatio="none"><path d="M1.2 14.3 L9.6 16 Q11 8 10.1 1.9 L22 4.5 L27.9 17.3 Q19 25 9.6 25.7 L1.2 24Z" fill="#dadada" stroke="#707070" stroke-width="0.9" stroke-linejoin="round"/><path d="M10.1 1.9 L22 4.5 Q17 12 9.6 16 Q11 8 10.1 1.9Z" fill="#efefef" stroke="#707070" stroke-width="0.7" stroke-linejoin="round"/><path d="M22 4.5 L27.9 17.3 Q19 25 9.6 25.7 V16 Q17 12 22 4.5Z" fill="#c4c4c4" stroke="#707070" stroke-width="0.7" stroke-linejoin="round"/><path d="M1.2 14.3 L9.6 16 V25.7 L1.2 24Z" fill="#707070" opacity="0.7"/><path d="M3 17 L8 18 V23 L3 22Z" fill="#dadada"/><path d="M10.1 1.9 L22 4.5 L27.9 17.3" fill="none" stroke="#707070" stroke-width="1.6"/><ellipse cx="26.4" cy="2.9" rx="1.4" ry="1.8" fill="#707070"/></svg>
<svg class="a" style="left:595px;top:142px" width="29" height="28" viewBox="0 0 29 28" preserveAspectRatio="none"><path d="M1.5 26 L27.5 3.5" stroke="#707070" stroke-width="2.2"/><ellipse cx="14" cy="15" rx="8.5" ry="6" transform="rotate(-35 14 15)" fill="none" stroke="#707070" stroke-width="5"/><ellipse cx="14" cy="15" rx="8.5" ry="6" transform="rotate(-35 14 15)" fill="none" stroke="#dadada" stroke-width="3"/><path d="M12 2 Q18 1 18 7 M9 26 Q5 22 9 18" fill="none" stroke="#707070" stroke-width="3.2"/><path d="M12 2 Q18 1 18 7 M9 26 Q5 22 9 18" fill="none" stroke="#efefef" stroke-width="1.6"/></svg>
<svg class="a" style="left:634px;top:142px" width="27" height="28" viewBox="0 0 27 28" preserveAspectRatio="none"><path d="M3 6 L10 2 L24 4 V21 L17 25 L3 23Z" fill="#dadada" stroke="#707070" stroke-width="0.9" stroke-linejoin="round"/><path d="M3 6 L17 8 L24 4 M17 8 V25" fill="none" stroke="#707070" stroke-width="0.8" stroke-linejoin="round"/><path d="M17 8 L24 4 V21 L17 25Z" fill="#c4c4c4"/><path d="M3 6 L10 2 L24 4 L17 8Z" fill="#efefef"/><path d="M3 6 L17 8 V25 L3 23Z" fill="none" stroke="#707070" stroke-width="0.9" stroke-linejoin="round"/><path d="M17 8 L24 4" stroke="#707070" stroke-width="0.9" stroke-linejoin="round"/><circle cx="3" cy="23" r="2.4" fill="#c4c4c4" stroke="#707070" stroke-width="0.8" stroke-linejoin="round"/><circle cx="17" cy="25" r="2.4" fill="#c4c4c4" stroke="#707070" stroke-width="0.8" stroke-linejoin="round"/><circle cx="17" cy="8" r="2.4" fill="#c4c4c4" stroke="#707070" stroke-width="0.8" stroke-linejoin="round"/><circle cx="24" cy="21" r="2.4" fill="#c4c4c4" stroke="#707070" stroke-width="0.8" stroke-linejoin="round"/></svg>
<svg class="a" style="left:669px;top:152px" width="11" height="7" viewBox="0 0 11 7" preserveAspectRatio="none"><path d="M0 0 H11 L5.5 6.5Z" fill="#555"/></svg>
<div class="a" style="left:683px;top:141px;width:1px;height:30px;background:#d6d6d6"></div>
<svg class="a" style="left:692px;top:142px" width="28" height="27" viewBox="0 0 28 27" preserveAspectRatio="none"><path d="M0.4 12.2 L14 2.2 L26.8 7.7 V16.8 L13.1 25.9 L0.4 21.3Z" fill="#a8a8a8" stroke="#5a5a5a" stroke-width="0.9" stroke-linejoin="round"/><path d="M0.4 12.2 L14 2.2 L26.8 7.7 L13.1 16.8Z" fill="#c0c0c0" stroke="#5a5a5a" stroke-width="0.9" stroke-linejoin="round"/><path d="M13.1 16.8 V25.9" stroke="#5a5a5a" stroke-width="0.9" stroke-linejoin="round"/><path d="M13.1 16.8 L26.8 7.7 V16.8 L13.1 25.9Z" fill="#929292"/><path d="M7 11.5 L14 6.5 L20 9 L13 14Z" fill="#777" stroke="#5a5a5a" stroke-width="0.8" stroke-linejoin="round"/></svg>
<svg class="a" style="left:728px;top:141px" width="30" height="29" viewBox="0 0 30 29" preserveAspectRatio="none"><path d="M2 1 L19 5 L28 6 V27 L19 27.5 L2 23Z" fill="#929292" stroke="#5a5a5a" stroke-width="0.9" stroke-linejoin="round"/><path d="M2 1 L19 5 V27.5 L2 23Z" fill="#b0b0b0" stroke="#5a5a5a" stroke-width="0.9" stroke-linejoin="round"/><path d="M19 5 L28 6 V27 L19 27.5Z" fill="#929292" stroke="#5a5a5a" stroke-width="0.8" stroke-linejoin="round"/><ellipse cx="10.5" cy="14.5" rx="6.3" ry="8" fill="#8e8e8e" stroke="#5a5a5a" stroke-width="1.1" stroke-linejoin="round"/><path d="M13 8.5 Q16.5 13 14.5 21 Q16.8 18 16.6 14 Q16.2 10 13 8.5Z" fill="#f4f4f4"/></svg>
<svg class="a" style="left:766px;top:142px" width="29" height="27" viewBox="0 0 29 27" preserveAspectRatio="none"><path d="M2 23 L28 4.5" stroke="#5a5a5a" stroke-width="2"/><path d="M1.5 9.5 Q8 3 16 2.5 L26 6 L27 18 L16 25.5 Q14 15 1.5 9.5Z" fill="#a8a8a8" stroke="#5a5a5a" stroke-width="0.9" stroke-linejoin="round"/><path d="M16 2.5 L26 6 L27 18 L16 25.5 Q16 10 16 2.5Z" fill="#929292" opacity="0.6"/><path d="M1.5 9.5 L4 13 Q14 16 14.5 25 L16 25.5" fill="none" stroke="#5a5a5a" stroke-width="0.8" stroke-linejoin="round"/><path d="M9 4.5 Q18 9 20 22 M12 3.5 Q21 8 23 20" fill="none" stroke="#5a5a5a" stroke-width="1.1"/></svg>
<svg class="a" style="left:804px;top:142px" width="27" height="28" viewBox="0 0 27 28" preserveAspectRatio="none"><path d="M2.5 12.3 L10.5 3.4 L25.3 5.9 V25.2 L11 23.2 L2.5 21.5Z" fill="#a8a8a8" stroke="#5a5a5a" stroke-width="0.9" stroke-linejoin="round"/><path d="M2.5 12.3 L10.5 3.4 L25.3 5.9 L11 14.3Z" fill="#c2c2c2" stroke="#5a5a5a" stroke-width="0.8" stroke-linejoin="round"/><path d="M11 14.3 L25.3 5.9 V25.2 L11 23.2Z" fill="#929292" stroke="#5a5a5a" stroke-width="0.8" stroke-linejoin="round"/><path d="M2.5 12.3 L11 14.3 V23.2 L2.5 21.5Z" fill="#5a5a5a" opacity="0.75" stroke="#5a5a5a" stroke-width="0.8" stroke-linejoin="round"/><path d="M4.5 15 L9 16 V21 L4.5 20Z" fill="#a8a8a8"/><path d="M25.3 5.9 V25.2" stroke="#5a5a5a" stroke-width="2"/><path d="M10.5 3.4 L25.3 5.9" stroke="#5a5a5a" stroke-width="1.6"/></svg>
<svg class="a" style="left:841px;top:142px" width="29" height="28" viewBox="0 0 29 28" preserveAspectRatio="none"><path d="M1.2 14.3 L9.6 16 Q11 8 10.1 1.9 L22 4.5 L27.9 17.3 Q19 25 9.6 25.7 L1.2 24Z" fill="#a8a8a8" stroke="#5a5a5a" stroke-width="0.9" stroke-linejoin="round"/><path d="M10.1 1.9 L22 4.5 Q17 12 9.6 16 Q11 8 10.1 1.9Z" fill="#c2c2c2" stroke="#5a5a5a" stroke-width="0.7" stroke-linejoin="round"/><path d="M22 4.5 L27.9 17.3 Q19 25 9.6 25.7 V16 Q17 12 22 4.5Z" fill="#929292" stroke="#5a5a5a" stroke-width="0.7" stroke-linejoin="round"/><path d="M1.2 14.3 L9.6 16 V25.7 L1.2 24Z" fill="#5a5a5a" opacity="0.7"/><path d="M3 17 L8 18 V23 L3 22Z" fill="#a8a8a8"/><path d="M10.1 1.9 L22 4.5 L27.9 17.3" fill="none" stroke="#5a5a5a" stroke-width="1.6"/><ellipse cx="26.4" cy="2.9" rx="1.4" ry="1.8" fill="#5a5a5a"/></svg>
<svg class="a" style="left:878px;top:142px" width="29" height="28" viewBox="0 0 29 28" preserveAspectRatio="none"><path d="M1.5 26 L27.5 3.5" stroke="#5a5a5a" stroke-width="2.2"/><ellipse cx="14" cy="15" rx="8.5" ry="6" transform="rotate(-35 14 15)" fill="none" stroke="#5a5a5a" stroke-width="5"/><ellipse cx="14" cy="15" rx="8.5" ry="6" transform="rotate(-35 14 15)" fill="none" stroke="#a8a8a8" stroke-width="3"/><path d="M12 2 Q18 1 18 7 M9 26 Q5 22 9 18" fill="none" stroke="#5a5a5a" stroke-width="3.2"/><path d="M12 2 Q18 1 18 7 M9 26 Q5 22 9 18" fill="none" stroke="#c2c2c2" stroke-width="1.6"/></svg>
<svg class="a" style="left:915px;top:142px" width="27" height="28" viewBox="0 0 27 28" preserveAspectRatio="none"><path d="M3 6 L10 2 L24 4 V21 L17 25 L3 23Z" fill="#a8a8a8" stroke="#5a5a5a" stroke-width="0.9" stroke-linejoin="round"/><path d="M3 6 L17 8 L24 4 M17 8 V25" fill="none" stroke="#5a5a5a" stroke-width="0.8" stroke-linejoin="round"/><path d="M17 8 L24 4 V21 L17 25Z" fill="#929292"/><path d="M3 6 L10 2 L24 4 L17 8Z" fill="#c2c2c2"/><path d="M3 6 L17 8 V25 L3 23Z" fill="none" stroke="#5a5a5a" stroke-width="0.9" stroke-linejoin="round"/><path d="M17 8 L24 4" stroke="#5a5a5a" stroke-width="0.9" stroke-linejoin="round"/><circle cx="3" cy="23" r="2.4" fill="#929292" stroke="#5a5a5a" stroke-width="0.8" stroke-linejoin="round"/><circle cx="17" cy="25" r="2.4" fill="#929292" stroke="#5a5a5a" stroke-width="0.8" stroke-linejoin="round"/><circle cx="17" cy="8" r="2.4" fill="#929292" stroke="#5a5a5a" stroke-width="0.8" stroke-linejoin="round"/><circle cx="24" cy="21" r="2.4" fill="#929292" stroke="#5a5a5a" stroke-width="0.8" stroke-linejoin="round"/></svg>
<svg class="a" style="left:950px;top:152px" width="11" height="7" viewBox="0 0 11 7" preserveAspectRatio="none"><path d="M0 0 H11 L5.5 6.5Z" fill="#555"/></svg>
<div class="a" style="left:965px;top:141px;width:1px;height:30px;background:#d6d6d6"></div>
<svg class="a" style="left:973px;top:142px" width="29" height="28" viewBox="0 0 29 28" preserveAspectRatio="none"><path d="M1.2 14 L21 3.5 L28.3 5.5 V27.3 H1.2Z" fill="#a9a9a9" stroke="#6e6e6e" stroke-width="0.9" stroke-linejoin="round"/><path d="M1.2 21 L28.3 9 V21 L12 27.3 H1.2Z" fill="#bcbcbc"/><path d="M1.2 22 L8 27.3 M12 27.3 L28.3 21" fill="none" stroke="#7a7a7a" stroke-width="0.7"/><path d="M5 6 Q7 1 10 3 L16 6 V20 L9 22 L5 19Z" fill="#999" stroke="#6a6a6a" stroke-width="0.8"/><path d="M16 6 L22 3.5 L28 5 V12 L16 18Z" fill="#b5b5b5" stroke="#6a6a6a" stroke-width="0.7"/><path d="M14 15 V23 A6 3 0 0 0 26 23 V15Z" fill="#e6e6e6" stroke="#6a6a6a" stroke-width="0.8"/><ellipse cx="20" cy="15" rx="6" ry="3" fill="#f4f4f4" stroke="#6a6a6a" stroke-width="0.8"/></svg>
<svg class="a" style="left:1010px;top:142px" width="29" height="28" viewBox="0 0 29 28" preserveAspectRatio="none"><path d="M1.2 14 L21 3.5 L28.3 5.5 V27.3 H1.2Z" fill="#a9a9a9" stroke="#6e6e6e" stroke-width="0.9" stroke-linejoin="round"/><path d="M1.2 21 L28.3 9 V21 L12 27.3 H1.2Z" fill="#bcbcbc"/><path d="M1.2 22 L8 27.3 M12 27.3 L28.3 21" fill="none" stroke="#7a7a7a" stroke-width="0.7"/><path d="M1.7999999999999998 15.24 L5 13.48 L8.2 15.24 V19.88 L5 21.64 L1.7999999999999998 19.88Z" fill="#8a8a8a" stroke="#6a6a6a" stroke-width="0.7" stroke-linejoin="round"/><path d="M1.7999999999999998 15.24 L5 17 L8.2 15.24 M5 17 V21.64" fill="none" stroke="#6a6a6a" stroke-width="0.6"/><path d="M1.7999999999999998 15.24 L5 13.48 L8.2 15.24 L5 17Z" fill="#fafafa" opacity="0.5"/><path d="M9.8 14.24 L13 12.48 L16.2 14.24 V18.88 L13 20.64 L9.8 18.88Z" fill="#e8e8e8" stroke="#6a6a6a" stroke-width="0.7" stroke-linejoin="round"/><path d="M9.8 14.24 L13 16 L16.2 14.24 M13 16 V20.64" fill="none" stroke="#6a6a6a" stroke-width="0.6"/><path d="M9.8 14.24 L13 12.48 L16.2 14.24 L13 16Z" fill="#fafafa" opacity="0.5"/><path d="M17.8 12.24 L21 10.48 L24.2 12.24 V16.88 L21 18.64 L17.8 16.88Z" fill="#e8e8e8" stroke="#6a6a6a" stroke-width="0.7" stroke-linejoin="round"/><path d="M17.8 12.24 L21 14 L24.2 12.24 M21 14 V18.64" fill="none" stroke="#6a6a6a" stroke-width="0.6"/><path d="M17.8 12.24 L21 10.48 L24.2 12.24 L21 14Z" fill="#fafafa" opacity="0.5"/></svg>
<svg class="a" style="left:1048px;top:142px" width="29" height="28" viewBox="0 0 29 28" preserveAspectRatio="none"><path d="M1.2 14 L21 3.5 L28.3 5.5 V27.3 H1.2Z" fill="#a9a9a9" stroke="#6e6e6e" stroke-width="0.9" stroke-linejoin="round"/><path d="M1.2 21 L28.3 9 V21 L12 27.3 H1.2Z" fill="#bcbcbc"/><path d="M1.2 22 L8 27.3 M12 27.3 L28.3 21" fill="none" stroke="#7a7a7a" stroke-width="0.7"/><path d="M12 6.35 L15 4.699999999999999 L18 6.35 V10.7 L15 12.35 L12 10.7Z" fill="#e8e8e8" stroke="#6a6a6a" stroke-width="0.7" stroke-linejoin="round"/><path d="M12 6.35 L15 8 L18 6.35 M15 8 V12.35" fill="none" stroke="#6a6a6a" stroke-width="0.6"/><path d="M12 6.35 L15 4.699999999999999 L18 6.35 L15 8Z" fill="#fafafa" opacity="0.5"/><path d="M20 7.35 L23 5.699999999999999 L26 7.35 V11.7 L23 13.35 L20 11.7Z" fill="#e8e8e8" stroke="#6a6a6a" stroke-width="0.7" stroke-linejoin="round"/><path d="M20 7.35 L23 9 L26 7.35 M23 9 V13.35" fill="none" stroke="#6a6a6a" stroke-width="0.6"/><path d="M20 7.35 L23 5.699999999999999 L26 7.35 L23 9Z" fill="#fafafa" opacity="0.5"/><path d="M5 11.35 L8 9.7 L11 11.35 V15.7 L8 17.349999999999998 L5 15.7Z" fill="#e8e8e8" stroke="#6a6a6a" stroke-width="0.7" stroke-linejoin="round"/><path d="M5 11.35 L8 13 L11 11.35 M8 13 V17.349999999999998" fill="none" stroke="#6a6a6a" stroke-width="0.6"/><path d="M5 11.35 L8 9.7 L11 11.35 L8 13Z" fill="#fafafa" opacity="0.5"/><path d="M20 15.35 L23 13.7 L26 15.35 V19.7 L23 21.349999999999998 L20 19.7Z" fill="#e8e8e8" stroke="#6a6a6a" stroke-width="0.7" stroke-linejoin="round"/><path d="M20 15.35 L23 17 L26 15.35 M23 17 V21.349999999999998" fill="none" stroke="#6a6a6a" stroke-width="0.6"/><path d="M20 15.35 L23 13.7 L26 15.35 L23 17Z" fill="#fafafa" opacity="0.5"/><path d="M5 18.35 L8 16.7 L11 18.35 V22.7 L8 24.349999999999998 L5 22.7Z" fill="#8a8a8a" stroke="#6a6a6a" stroke-width="0.7" stroke-linejoin="round"/><path d="M5 18.35 L8 20 L11 18.35 M8 20 V24.349999999999998" fill="none" stroke="#6a6a6a" stroke-width="0.6"/><path d="M5 18.35 L8 16.7 L11 18.35 L8 20Z" fill="#fafafa" opacity="0.5"/><path d="M13 20.35 L16 18.7 L19 20.35 V24.7 L16 26.349999999999998 L13 24.7Z" fill="#e8e8e8" stroke="#6a6a6a" stroke-width="0.7" stroke-linejoin="round"/><path d="M13 20.35 L16 22 L19 20.35 M16 22 V26.349999999999998" fill="none" stroke="#6a6a6a" stroke-width="0.6"/><path d="M13 20.35 L16 18.7 L19 20.35 L16 22Z" fill="#fafafa" opacity="0.5"/></svg>
<svg class="a" style="left:1085px;top:142px" width="29" height="28" viewBox="0 0 29 28" preserveAspectRatio="none"><path d="M1.2 14 L21 3.5 L28.3 5.5 V27.3 H1.2Z" fill="#a9a9a9" stroke="#6e6e6e" stroke-width="0.9" stroke-linejoin="round"/><path d="M1.2 21 L28.3 9 V21 L12 27.3 H1.2Z" fill="#bcbcbc"/><path d="M1.2 22 L8 27.3 M12 27.3 L28.3 21" fill="none" stroke="#7a7a7a" stroke-width="0.7"/><path d="M13 7 L21 2.5 L28.3 6 V17 L20 21 L13 17Z" fill="#dcdcdc" stroke="#6a6a6a" stroke-width="0.7"/><path d="M13 7 L20 11 L28.3 6 M20 11 V21" fill="none" stroke="#6a6a6a" stroke-width="0.6"/><path d="M2.8 8.24 L6 6.4799999999999995 L9.2 8.24 V12.88 L6 14.64 L2.8 12.88Z" fill="#e8e8e8" stroke="#6a6a6a" stroke-width="0.7" stroke-linejoin="round"/><path d="M2.8 8.24 L6 10 L9.2 8.24 M6 10 V14.64" fill="none" stroke="#6a6a6a" stroke-width="0.6"/><path d="M2.8 8.24 L6 6.4799999999999995 L9.2 8.24 L6 10Z" fill="#fafafa" opacity="0.5"/><path d="M8.8 20.24 L12 18.48 L15.2 20.24 V24.88 L12 26.64 L8.8 24.88Z" fill="#8a8a8a" stroke="#6a6a6a" stroke-width="0.7" stroke-linejoin="round"/><path d="M8.8 20.24 L12 22 L15.2 20.24 M12 22 V26.64" fill="none" stroke="#6a6a6a" stroke-width="0.6"/><path d="M8.8 20.24 L12 18.48 L15.2 20.24 L12 22Z" fill="#fafafa" opacity="0.5"/><path d="M17.4 18.02 L21 16.04 L24.6 18.02 V23.240000000000002 L21 25.220000000000002 L17.4 23.240000000000002Z" fill="#ededed" stroke="#6a6a6a" stroke-width="0.7" stroke-linejoin="round"/><path d="M17.4 18.02 L21 20 L24.6 18.02 M21 20 V25.220000000000002" fill="none" stroke="#6a6a6a" stroke-width="0.6"/><path d="M17.4 18.02 L21 16.04 L24.6 18.02 L21 20Z" fill="#fafafa" opacity="0.5"/></svg>
<div class="a" style="left:1120px;top:141px;width:1px;height:30px;background:#d6d6d6"></div>
<svg class="a" style="left:1129px;top:142px" width="29" height="28" viewBox="0 0 29 28" preserveAspectRatio="none"><path d="M1 21.5 V17 Q1.5 6 11 3 L16 1.5 L28.5 6 V20 L14.5 25.7Z" fill="#8e8e8e" stroke="#5a5a5a" stroke-width="0.9" stroke-linejoin="round"/><path d="M11 3 L16 1.5 L28.5 6 L23 8.5Z" fill="#c2c2c2" stroke="#5a5a5a" stroke-width="0.9" stroke-linejoin="round"/><path d="M23 8.5 L28.5 6 V20 L14.5 25.7 V21 Q15.5 11 23 8.5Z" fill="#8a8a8a" stroke="#5a5a5a" stroke-width="0.9" stroke-linejoin="round"/><path d="M1 17 L14.5 21 V25.7 L1 21.5Z" fill="#b4b4b4" stroke="#5a5a5a" stroke-width="0.9" stroke-linejoin="round"/><path d="M3 9 Q8 4 14 5" fill="none" stroke="#b0b0b0" stroke-width="1.5"/></svg>
<svg class="a" style="left:1166px;top:142px" width="29" height="28" viewBox="0 0 29 28" preserveAspectRatio="none"><path d="M1 21.5 V17 L10 3 L15 1.5 L27.5 6 V20 L13.5 25.7Z" fill="#8e8e8e" stroke="#5a5a5a" stroke-width="0.9" stroke-linejoin="round"/><path d="M10 3 L15 1.5 L27.5 6 L22.5 8.5Z" fill="#c2c2c2" stroke="#5a5a5a" stroke-width="0.9" stroke-linejoin="round"/><path d="M22.5 8.5 L27.5 6 V20 L13.5 25.7 V21Z" fill="#8a8a8a" stroke="#5a5a5a" stroke-width="0.9" stroke-linejoin="round"/><path d="M1 17 L13.5 21 V25.7 L1 21.5Z" fill="#b4b4b4" stroke="#5a5a5a" stroke-width="0.9" stroke-linejoin="round"/></svg>
<svg class="a" style="left:1203px;top:142px" width="28" height="28" viewBox="0 0 28 28" preserveAspectRatio="none"><path d="M1 6 L13 1 L27 5 V21 L13 27 L1 22Z" fill="#a6a6a6" stroke="#5a5a5a" stroke-width="0.9" stroke-linejoin="round"/><path d="M1 6 L13 1 L27 5 L14.5 10Z" fill="#b4b4b4" stroke="#5a5a5a" stroke-width="0.9" stroke-linejoin="round"/><path d="M4 10 L14.5 13 V24 L4 20.5Z" fill="#8e8e8e" stroke="#5a5a5a" stroke-width="0.9" stroke-linejoin="round"/><path d="M14.5 13 L24.5 9 V20.5 L14.5 24Z" fill="#9c9c9c" stroke="#5a5a5a" stroke-width="0.9" stroke-linejoin="round"/><path d="M9 24 L14.5 21.5 L20 24" fill="none" stroke="#eee" stroke-width="1.2"/></svg>
<svg class="a" style="left:1241px;top:142px" width="28" height="28" viewBox="0 0 28 28" preserveAspectRatio="none"><path d="M0.8 24 L3 5 L13 1 L27 4.5 V21 L14 27Z" fill="#a8a8a8" stroke="#5a5a5a" stroke-width="0.9" stroke-linejoin="round"/><path d="M5 8 L13 4.5 V17 L5.5 21Z" fill="#8a8a8a" stroke="#5a5a5a" stroke-width="0.9" stroke-linejoin="round"/><path d="M13 4.5 L24 7 V19 L13 17Z" fill="#999" stroke="#5a5a5a" stroke-width="0.9" stroke-linejoin="round"/><path d="M5.5 21 L13 17 L24 19 L15 23.5Z" fill="#b8b8b8" stroke="#5a5a5a" stroke-width="0.9" stroke-linejoin="round"/></svg>
<div class="a" style="left:1277px;top:141px;width:1px;height:30px;background:#d6d6d6"></div>
<svg class="a" style="left:1285px;top:142px" width="28" height="28" viewBox="0 0 28 28" preserveAspectRatio="none"><defs><radialGradient id="sph" cx="0.4" cy="0.35" r="0.7"><stop offset="0" stop-color="#bdbdbd"/><stop offset="1" stop-color="#7e7e7e"/></radialGradient></defs><circle cx="18" cy="10" r="8.5" fill="url(#sph)" stroke="#666" stroke-width="0.9"/><circle cx="10.5" cy="17.5" r="8.5" fill="url(#sph)" stroke="#666" stroke-width="0.9"/><circle cx="10.5" cy="17.5" r="7.2" fill="none" stroke="#a0a0a0" stroke-width="0.8"/></svg>
<div class="a" style="left:1320px;top:134px;width:1px;height:40px;background:#bdbdbd"></div>
<svg class="a" style="left:1325px;top:138px" width="4" height="34"><line x1="1" y1="0" x2="1" y2="34" stroke="#9a9a9a" stroke-width="1" stroke-dasharray="1 2"/><line x1="3" y1="1.5" x2="3" y2="34" stroke="#c4c4c4" stroke-width="1" stroke-dasharray="1 2"/></svg>
<svg class="a" style="left:1337px;top:142px" width="29" height="28" viewBox="0 0 29 28" preserveAspectRatio="none"><path d="M1 2.5 L4 0.8 L16 0.8 Q20 1.5 21 6 L22 19 L17 23.5 L3.5 22 Q1 21 1 19Z" fill="#e4e4e4" stroke="#7a7a7a" stroke-width="0.9" stroke-linejoin="round"/><path d="M16 0.8 Q20 1.5 21 6 L22 19 L17 23.5 L16.5 5Z" fill="#cfcfcf" stroke="#7a7a7a" stroke-width="0.7"/><ellipse cx="8.8" cy="12" rx="6.6" ry="7.6" fill="#d8d8d8" stroke="#7a7a7a" stroke-width="0.9"/><path d="M2.2 12.5 H15.4 A6.6 7.6 0 0 1 2.2 12.5Z" fill="#8c8c8c"/><rect x="17.5" y="9" width="2.5" height="6" rx="1" fill="#aaa" stroke="#777" stroke-width="0.6"/><path d="M14 22.5 L16 20.5 L26 23 L27.5 25 L25 27 L15 24Z" fill="#bdbdbd" stroke="#6e6e6e" stroke-width="0.8" stroke-linejoin="round"/></svg>
<svg class="a" style="left:1374px;top:142px" width="29" height="28" viewBox="0 0 29 28" preserveAspectRatio="none"><path d="M1 2.5 L4 0.8 L16 0.8 Q20 1.5 21 6 L22 19 L17 23.5 L3.5 22 Q1 21 1 19Z" fill="#e4e4e4" stroke="#7a7a7a" stroke-width="0.9" stroke-linejoin="round"/><path d="M16 0.8 Q20 1.5 21 6 L22 19 L17 23.5 L16.5 5Z" fill="#cfcfcf" stroke="#7a7a7a" stroke-width="0.7"/><ellipse cx="8.8" cy="12" rx="6.6" ry="7.6" fill="#d8d8d8" stroke="#7a7a7a" stroke-width="0.9"/><path d="M2.2 12.5 H15.4 A6.6 7.6 0 0 1 2.2 12.5Z" fill="#8c8c8c"/><rect x="17.5" y="9" width="2.5" height="6" rx="1" fill="#aaa" stroke="#777" stroke-width="0.6"/><path d="M14 22.5 L16 20.5 L26 23 L27.5 25 L25 27 L15 24Z" fill="#bdbdbd" stroke="#6e6e6e" stroke-width="0.8" stroke-linejoin="round"/><path d="M2.5 1.5 L6 24 L26 15" fill="none" stroke="#555" stroke-width="2.4" stroke-linejoin="round"/><path d="M5 2 Q22 0 24.5 14" fill="none" stroke="#666" stroke-width="2.2"/><path d="M22 10 L25 15 L27 10Z" fill="#666"/></svg>
<div class="a" style="left:1410px;top:141px;width:1px;height:30px;background:#d6d6d6"></div>
<svg class="a" style="left:1419px;top:142px" width="29" height="28" viewBox="0 0 29 28" preserveAspectRatio="none"><path d="M1 2.5 L4 0.8 L16 0.8 Q20 1.5 21 6 L22 19 L17 23.5 L3.5 22 Q1 21 1 19Z" fill="#e4e4e4" stroke="#7a7a7a" stroke-width="0.9" stroke-linejoin="round"/><path d="M16 0.8 Q20 1.5 21 6 L22 19 L17 23.5 L16.5 5Z" fill="#cfcfcf" stroke="#7a7a7a" stroke-width="0.7"/><ellipse cx="8.8" cy="12" rx="6.6" ry="7.6" fill="#d8d8d8" stroke="#7a7a7a" stroke-width="0.9"/><path d="M2.2 12.5 H15.4 A6.6 7.6 0 0 1 2.2 12.5Z" fill="#8c8c8c"/><rect x="17.5" y="9" width="2.5" height="6" rx="1" fill="#aaa" stroke="#777" stroke-width="0.6"/><path d="M14 22.5 L16 20.5 L26 23 L27.5 25 L25 27 L15 24Z" fill="#bdbdbd" stroke="#6e6e6e" stroke-width="0.8" stroke-linejoin="round"/><path d="M17 4 Q26 1 27 8 L24 8 Q22 5 17 8Z" fill="#bbb" stroke="#666" stroke-width="0.8"/><path d="M27 12 Q26 21 17 18 V14 Q22 16 24 12Z" fill="#bbb" stroke="#666" stroke-width="0.8"/></svg>
<svg class="a" style="left:1455px;top:142px" width="29" height="28" viewBox="0 0 29 28" preserveAspectRatio="none"><path d="M1 2.5 L4 0.8 L16 0.8 Q20 1.5 21 6 L22 19 L17 23.5 L3.5 22 Q1 21 1 19Z" fill="#e4e4e4" stroke="#7a7a7a" stroke-width="0.9" stroke-linejoin="round"/><path d="M16 0.8 Q20 1.5 21 6 L22 19 L17 23.5 L16.5 5Z" fill="#cfcfcf" stroke="#7a7a7a" stroke-width="0.7"/><ellipse cx="8.8" cy="12" rx="6.6" ry="7.6" fill="#d8d8d8" stroke="#7a7a7a" stroke-width="0.9"/><path d="M2.2 12.5 H15.4 A6.6 7.6 0 0 1 2.2 12.5Z" fill="#8c8c8c"/><rect x="17.5" y="9" width="2.5" height="6" rx="1" fill="#aaa" stroke="#777" stroke-width="0.6"/><path d="M14 22.5 L16 20.5 L26 23 L27.5 25 L25 27 L15 24Z" fill="#bdbdbd" stroke="#6e6e6e" stroke-width="0.8" stroke-linejoin="round"/><path d="M2 13 L14 27 M14 13 L2 27" stroke="#6a6a6a" stroke-width="3.2" stroke-linecap="round"/></svg>
<svg class="a" style="left:1524px;top:153px" width="9" height="7" viewBox="0 0 9 7"><path d="M0.8 0.8 L3.3 3.5 L0.8 6.2 M4.8 0.8 L7.3 3.5 L4.8 6.2" fill="none" stroke="#444" stroke-width="1.1"/></svg>
<!--/TB-->
<div id="view" class="a"></div>
<svg class="a" style="left:326px;top:176px" width="1210" height="576" viewBox="326 176 1210 576">
<defs>
<linearGradient id="cyl" gradientUnits="userSpaceOnUse" x1="620" y1="400" x2="720" y2="480"><stop offset="0" stop-color="#161616"/><stop offset="0.45" stop-color="#2e2e2e"/><stop offset="0.8" stop-color="#2a2a2a"/><stop offset="1" stop-color="#111"/></linearGradient>
</defs>
<!-- left side -->
<path d="M577.6 275.4 L560.1 298.1 L519.6 540.5 L538.3 517.2Z" fill="#1b1b1b" stroke="#000" stroke-width="1"/>
<!-- bottom side -->
<path d="M538.3 517.2 L519.6 540.5 L1011 630.3 L1028.2 606.4Z" fill="#2d2d2d" stroke="#000" stroke-width="1"/>
<!-- top face -->
<path d="M577.6 275.4 L1069 365.1 L1028.2 606.4 L538.3 517.2Z" fill="#d3d3d3" stroke="#000" stroke-width="1.2"/>
<!-- pocket opening: top wall -->
<path d="M592.1 296.6 L1047.6 380.3 L1013 585.5 L558.5 502.4Z" fill="#2a2a2a"/>
<!-- right wall -->
<path d="M1047.6 380.3 L1013 585.5 L1001 583 L1031.6 400Z" fill="#1b1b1b"/>
<!-- floor -->
<path d="M590 320.2 L1031.6 400 L1001 583.2 L558.5 502.4Z" fill="#d3d3d3"/>
<path d="M590 320.2 L558.5 502.4 L1001 583.2" fill="none" stroke="#000" stroke-width="1.1"/>
<path d="M592.1 296.6 L1047.6 380.3 L1013 585.5 M592.1 296.6 L558.5 502.4" fill="none" stroke="#111" stroke-width="0.8"/>
<!-- cylinder hole -->
<circle cx="664.9" cy="440.9" r="50.7" fill="url(#cyl)"/>
<path d="M640.8 389.2 L721 451.2 L705 471.9 L624.8 409.9Z" fill="url(#cyl)"/>
<circle cx="680.9" cy="420.2" r="50.7" fill="#d3d3d3" stroke="#000" stroke-width="1.1"/>
</svg>
<svg class="a" style="left:1416px;top:176px" width="120" height="120" viewBox="1416 176 120 120">
<g fill="#8f8fb3">
<path d="M1477.9 181.9 L1469 190.7 L1486.8 190.7Z"/>
<path d="M1477.9 286.6 L1469 277.4 L1486.8 277.4Z"/>
<path d="M1425.1 234.2 L1434.7 225.4 L1434.7 243Z"/>
<path d="M1530.7 234.2 L1521 225.4 L1521 243.8Z"/>
</g>
<path d="M1463.5 193.5 Q1450 197 1443 205" fill="none" stroke="#8f8fb3" stroke-width="6"/>
<path d="M1436.5 208.5 L1439 197.5 L1448 206Z" fill="#8f8fb3"/>
<path d="M1492 193.5 Q1505 197 1512 205" fill="none" stroke="#8f8fb3" stroke-width="6"/>
<path d="M1518.5 208.5 L1516 197.5 L1507 206Z" fill="#8f8fb3"/>
<path d="M1459.4 205.1 L1499.9 211.1 L1506.4 217.1 L1503.6 252.1 L1494.4 258.6 L1452.9 251.2 L1450.6 246.6 L1455.7 208.8Z" fill="#b3b3d3" stroke="#a0a0c8" stroke-width="0.8"/><path d="M1463 209.7 L1499 214.4 L1497.1 250.3 L1457 244.8Z" fill="#d1d1e5"/><circle cx="1460" cy="209" r="3" fill="#cfcfe6"/><circle cx="1455" cy="246" r="3" fill="#cfcfe6"/><circle cx="1500" cy="254" r="3" fill="#cfcfe6"/><circle cx="1503" cy="215" r="2.5" fill="#c4c4de"/>
<text x="0" y="0" font-family="Liberation Sans" font-weight="bold" font-size="10.5" fill="#000" stroke="#000" stroke-width="0.35" transform="translate(1464.5,232) rotate(9) scale(0.86,1)" letter-spacing="-0.6">BOTTOM</text>
<path d="M1457.3 196 L1497.1 204.7" stroke="#ff0000" stroke-width="1.6"/>
<path d="M1457.3 196.5 L1447.7 237.2" stroke="#00e000" stroke-width="1.6"/>
<path d="M1457.5 196.5 L1458.8 207.7" stroke="#0000ff" stroke-width="1.8"/>
<text x="1514" y="210" font-family="Liberation Sans" font-size="7" fill="#d04040">X</text>
<text x="1445" y="254" font-family="Liberation Sans" font-size="7" fill="#20c020">Y</text>
<path d="M1496.5 270 L1504 267.5 L1511.5 270 L1511.5 280 L1504 282.5 L1496.5 280Z" fill="#8383a8"/>
<path d="M1496.5 270 L1504 267.5 L1511.5 270 L1504 272.5Z" fill="#9999bb"/>
<path d="M1516 272.8 L1524.5 272.8 L1520.3 277.7Z" fill="#3f3f66"/>
</svg>
<svg class="a" style="left:1495px;top:712px" width="41" height="36" viewBox="1495 712 41 36">
<path d="M1505.9 723.6 L1524 725.4" stroke="#c02020" stroke-width="1.3"/>
<path d="M1520 722.5 L1526 725.6 L1520 727.8Z" fill="#c02020"/>
<path d="M1505.9 723.6 L1504.4 741" stroke="#109010" stroke-width="1.5"/>
<path d="M1502 737 L1504.3 743 L1507 737.5Z" fill="#109010"/>
<circle cx="1505.9" cy="723.6" r="1.3" fill="#2030c0"/>
<text x="1527.5" y="727" font-family="Liberation Sans" font-size="7.5" fill="#111">X</text><text x="1505.5" y="743.5" font-family="Liberation Sans" font-size="7.5" fill="#111">Y</text><text x="1507" y="722.5" font-family="Liberation Sans" font-size="4.5" fill="#222">Z</text></svg>
<div id="dock" class="a">
  <div class="a" style="left:1px;top:1px;width:320px;height:22px;background:#dadada;border:1px solid #cfcfcf"></div>
  <div class="t" style="left:6px;top:7px;font-size:14px">Combo View</div>
  <svg class="a" style="left:304px;top:7px" width="10" height="11" viewBox="0 0 10 11"><rect x="3.6" y="0.8" width="5.6" height="5.6" fill="none" stroke="#333" stroke-width="1.5"/><rect x="0.8" y="4.3" width="6" height="5.9" fill="#dadada" stroke="#333" stroke-width="1.5"/><rect x="1.6" y="5.8" width="4.4" height="1" fill="#333"/></svg>
  <div class="a" style="left:2px;top:30px;width:60px;height:25px;background:#f0f0f0;border:1px solid #e3e3e3;border-bottom:none"></div>
  <div class="t" style="left:14px;top:36px;font-size:13px">Model</div>
  <div class="a" style="left:62px;top:26px;width:88px;height:30px;background:#fff;border:1px solid #e6e6e6;border-bottom:none"></div>
  <div class="t" style="left:103px;top:35px;font-size:13px">Tasks</div>
  <svg class="a" style="left:78px;top:30px" width="20" height="20" viewBox="0 0 20 20"><path d="M1 5 L5 1 L16.5 12.5 L12.5 16.5Z" fill="#3b6fb6" stroke="#10264a" stroke-width="0.9"/><path d="M3 3 L14.5 14.5" stroke="#6a9ad8" stroke-width="1.2"/><path d="M12.5 16.5 L16.5 12.5 L19 19Z" fill="#fff" stroke="#222" stroke-width="0.8"/><path d="M17.2 17.2 L19 19 L16.5 18.3Z" fill="#000"/></svg>

  <div class="a" style="left:2px;top:55px;width:318px;height:548px;background:#fff;border:1px solid #dcdcdc"></div>
  <div class="a" style="left:4px;top:57px;width:313px;height:542px;background:linear-gradient(#a9a9c3 0px,#8a8aab 50px,#5d5c86 103px,#363565 150px,#333262 175px,#333262 100%)"></div>

  <!-- OK / Cancel -->
  <div class="a" style="left:62px;top:71px;width:100px;height:41px;border:4px solid #f8822a"></div>
  <div class="a" style="left:66.5px;top:78.5px;width:88.5px;height:26px;background:#e1e1e1;border:2px solid #0078d7"></div>
  <div class="t" style="left:102px;top:86px;font-size:13px">OK</div>
  <div class="a" style="left:164.5px;top:79.5px;width:88px;height:25px;background:#e1e1e1"></div>
  <div class="t" style="left:189px;top:86px;font-size:12.5px">Cancel</div>
  <!-- Pad parameters box -->
  <div class="a" style="left:14px;top:126px;width:292px;height:377px;background:#d6dff7;border:1px solid #fff;border-radius:4px 4px 0 0"></div>
  <div class="a" style="left:15px;top:127px;width:290px;height:28px;background:linear-gradient(90deg,#fafbfe,#c7d4f6);border-radius:3px 3px 0 0"></div>
  <div class="a" style="left:15px;top:155px;width:290px;height:1px;background:#fff"></div>
  <div class="t" style="left:42px;top:134.5px;font-size:14px;font-weight:bold;color:#215dc6">Pad parameters</div>
  <div class="a" style="left:283px;top:132px;width:18px;height:18px;border-radius:50%;background:#fff;box-shadow:0 0 1px #9aa8c8"></div>
  <svg class="a" style="left:286px;top:135px" width="12" height="12" viewBox="0 0 12 12"><path d="M2.5 6 L6 2.5 L9.5 6 M2.5 10 L6 6.5 L9.5 10" fill="none" stroke="#1f3f9f" stroke-width="1.7"/></svg>
  <!-- Type -->
  <div class="t" style="left:30px;top:177px;font-size:13px">Type</div>
  <div class="a" style="left:117px;top:172px;width:173px;height:22px;background:#e1e1e1;border:1px solid #c8c8c8;border-radius:1px"></div>
  <div class="t" style="left:122px;top:177px;font-size:13px">Dimension</div>
  <svg class="a" style="left:273px;top:179px" width="11" height="7" viewBox="0 0 11 7"><path d="M1 1 L5.5 5.5 L10 1" fill="none" stroke="#444" stroke-width="1.1"/></svg>
  <!-- Length -->
  <div class="t" style="left:30px;top:209px;font-size:13px">Length</div>
  <div class="a" style="left:117px;top:201.2px;width:173px;height:26.3px;background:#fff;border:1px solid #9a9a9a;border-radius:1px"></div>
  <div class="a" style="left:111px;top:199.3px;width:79px;height:32.5px;border:4px solid #f8822a"></div>
  <div class="t" style="left:122px;top:210px;font-size:13px">12.6 mm</div>
  <div class="a" style="left:269.5px;top:204px;width:17.5px;height:22px;border:1px solid #cfcfcf;background:#efefef"></div><div class="a" style="left:270px;top:215px;width:17px;height:1px;background:#cfcfcf"></div>
  <svg class="a" style="left:274px;top:206px" width="8" height="16" viewBox="0 0 8 16"><path d="M0.5 4 L4 0.4 L7.5 4Z M0.5 12 L4 15.8 L7.5 12Z" fill="#000"/></svg>
  <!-- group box -->
  <div class="a" style="left:30px;top:243px;width:259px;height:110px;border:1px solid #d2d9ee"></div>
  <div class="a" style="left:38px;top:234px;width:150px;height:18px;background:#d6dff7"></div>
  <div class="a" style="left:40px;top:235.5px;width:15px;height:15px;background:#fff;border:1px solid #333"></div>
  <div class="t" style="left:61px;top:238px;font-size:13px">Use custom direction</div>
  <div class="t" style="left:42px;top:268.3px;font-size:13px;color:#8a8a8a">x</div>
  <div class="a" style="left:163px;top:263.3px;width:114.5px;height:21px;background:#f0f0f0;border:1px solid #d0d0d0"></div>
  <div class="t" style="left:167px;top:269.3px;font-size:13px;color:#a0a0a0">1.00</div>
  <svg class="a" style="left:240px;top:263.8px" width="15" height="15" viewBox="0 0 15 15"><circle cx="7.3" cy="7.2" r="6.4" fill="#ececec" stroke="#b8b8b8" stroke-width="1.1"/><circle cx="7.3" cy="7.2" r="4.8" fill="none" stroke="#d4d4d4" stroke-width="0.8"/><text x="7.3" y="10" font-size="6.5" text-anchor="middle" fill="#a8a8a8" font-family="Liberation Sans" font-style="italic">f(x)</text></svg>
  <div class="a" style="left:257.5px;top:265.1px;width:17px;height:17px;border:1px solid #e2e2e2"></div><div class="a" style="left:258px;top:273.3px;width:16px;height:1px;background:#e2e2e2"></div><svg class="a" style="left:262px;top:266.3px" width="8" height="13" viewBox="0 0 8 13"><path d="M0.5 3.6 L4 0.2 L7.5 3.6Z M0.5 8.6 L4 12.2 L7.5 8.6Z" fill="#555"/></svg>
  <div class="t" style="left:42px;top:297.2px;font-size:13px;color:#8a8a8a">y</div>
  <div class="a" style="left:163px;top:292.2px;width:114.5px;height:21px;background:#f0f0f0;border:1px solid #d0d0d0"></div>
  <div class="t" style="left:167px;top:298.2px;font-size:13px;color:#a0a0a0">1.00</div>
  <svg class="a" style="left:240px;top:292.7px" width="15" height="15" viewBox="0 0 15 15"><circle cx="7.3" cy="7.2" r="6.4" fill="#ececec" stroke="#b8b8b8" stroke-width="1.1"/><circle cx="7.3" cy="7.2" r="4.8" fill="none" stroke="#d4d4d4" stroke-width="0.8"/><text x="7.3" y="10" font-size="6.5" text-anchor="middle" fill="#a8a8a8" font-family="Liberation Sans" font-style="italic">f(x)</text></svg>
  <div class="a" style="left:257.5px;top:294.0px;width:17px;height:17px;border:1px solid #e2e2e2"></div><div class="a" style="left:258px;top:302.2px;width:16px;height:1px;background:#e2e2e2"></div><svg class="a" style="left:262px;top:295.2px" width="8" height="13" viewBox="0 0 8 13"><path d="M0.5 3.6 L4 0.2 L7.5 3.6Z M0.5 8.6 L4 12.2 L7.5 8.6Z" fill="#555"/></svg>
  <div class="t" style="left:42px;top:326px;font-size:13px;color:#8a8a8a">z</div>
  <div class="a" style="left:163px;top:321px;width:114.5px;height:21px;background:#f0f0f0;border:1px solid #d0d0d0"></div>
  <div class="t" style="left:167px;top:327px;font-size:13px;color:#a0a0a0">1.00</div>
  <svg class="a" style="left:240px;top:321.5px" width="15" height="15" viewBox="0 0 15 15"><circle cx="7.3" cy="7.2" r="6.4" fill="#ececec" stroke="#b8b8b8" stroke-width="1.1"/><circle cx="7.3" cy="7.2" r="4.8" fill="none" stroke="#d4d4d4" stroke-width="0.8"/><text x="7.3" y="10" font-size="6.5" text-anchor="middle" fill="#a8a8a8" font-family="Liberation Sans" font-style="italic">f(x)</text></svg>
  <div class="a" style="left:257.5px;top:322.8px;width:17px;height:17px;border:1px solid #e2e2e2"></div><div class="a" style="left:258px;top:331.0px;width:16px;height:1px;background:#e2e2e2"></div><svg class="a" style="left:262px;top:324.0px" width="8" height="13" viewBox="0 0 8 13"><path d="M0.5 3.6 L4 0.2 L7.5 3.6Z M0.5 8.6 L4 12.2 L7.5 8.6Z" fill="#555"/></svg>

  <div class="a" style="left:31px;top:364.5px;width:15px;height:15px;background:#fff;border:1px solid #333"></div>
  <div class="t" style="left:52px;top:366px;font-size:13px">Symmetric to plane</div>
  <div class="a" style="left:31px;top:393px;width:15px;height:15px;background:#fff;border:1px solid #333"></div>
  <div class="t" style="left:52px;top:394.5px;font-size:13px">Reversed</div>
  <div class="a" style="left:31px;top:420px;width:88px;height:25px;background:#cccccc"></div>
  <div class="t" style="left:61px;top:426px;font-size:13px;color:#8c8c8c">Face</div>
  <div class="a" style="left:127px;top:421.5px;width:162px;height:22px;background:#f0f0f0;border:1px solid #d3d3d3"></div>
  <div class="t" style="left:131px;top:426px;font-size:13px;color:#8c8c8c">No face selected</div>
  <div class="a" style="left:31px;top:453px;width:258px;height:1px;background:#a7abb8"></div>
  <div class="a" style="left:31px;top:467.5px;width:15px;height:15px;background:#fff;border:1px solid #333"></div>
  <svg class="a" style="left:31px;top:467.5px" width="15" height="15" viewBox="0 0 15 15"><path d="M3 7.5 L6 10.5 L12 4" fill="none" stroke="#222" stroke-width="1.3"/></svg>
  <div class="t" style="left:52px;top:469px;font-size:13px">Update view</div>
  <svg class="a" style="left:21px;top:131px" width="19" height="19" viewBox="0 0 19 19"><path d="M1.5 13 L9.5 9.5 L17.5 13 L9.5 17.5Z" fill="#fff" stroke="#777" stroke-width="1.6"/><path d="M1 6 L9.5 2 L18 6 V11 L9.5 14.5 L1 11Z" fill="#e6d21a" stroke="#6b5d10" stroke-width="0.8"/><path d="M1 6 L9.5 9.5 L18 6 L9.5 2Z" fill="#f7e85a" stroke="#6b5d10" stroke-width="0.7"/><path d="M9.5 9.5 V14.5" stroke="#6b5d10" stroke-width="0.7"/></svg>
  <svg class="a" style="left:252px;top:203px" width="14" height="14" viewBox="0 0 14 14"><circle cx="7" cy="7" r="6.3" fill="#cfe0f5" stroke="#5d8fd0" stroke-width="1.2"/><text x="7" y="10" font-size="7.5" text-anchor="middle" fill="#2f63b0" font-family="Liberation Sans" font-style="italic">f(x)</text></svg>
</div>
<div class="t" style="left:2px;top:792px;font-size:13.1px">Preselected: Unnamed.Body001.Pad002.Edge9 (0.000000 mm, 21.855471 mm, 0.000000 mm)</div>

<!-- bottom tabs -->
<div class="a" style="left:329px;top:753px;width:133px;height:24px;background:#f0f0f0;border:1px solid #dcdcdc;border-top:none"></div>
<svg class="a" style="left:341px;top:755px" width="19" height="18" viewBox="0 0 19 18"><defs><linearGradient id="fr" x1="0" y1="0" x2="1" y2="1"><stop offset="0" stop-color="#f42a2a"/><stop offset="1" stop-color="#a80000"/></linearGradient></defs><path d="M0.2 0 H10 V3.5 H4.3 V5.9 H7.8 V10.6 H4.3 V17.6 H0.2Z" fill="url(#fr)" stroke="#8a0000" stroke-width="0.5"/><g transform="translate(11.7,10.8)" fill="#5a8bd0" stroke="#2b5699" stroke-width="0.5"><circle r="4.7"/><rect x="-1.4" y="-6.3" width="2.8" height="2.6" rx="0.4" transform="rotate(0)"/><rect x="-1.4" y="-6.3" width="2.8" height="2.6" rx="0.4" transform="rotate(45)"/><rect x="-1.4" y="-6.3" width="2.8" height="2.6" rx="0.4" transform="rotate(90)"/><rect x="-1.4" y="-6.3" width="2.8" height="2.6" rx="0.4" transform="rotate(135)"/><rect x="-1.4" y="-6.3" width="2.8" height="2.6" rx="0.4" transform="rotate(180)"/><rect x="-1.4" y="-6.3" width="2.8" height="2.6" rx="0.4" transform="rotate(225)"/><rect x="-1.4" y="-6.3" width="2.8" height="2.6" rx="0.4" transform="rotate(270)"/><rect x="-1.4" y="-6.3" width="2.8" height="2.6" rx="0.4" transform="rotate(315)"/><circle r="4.6" stroke="none"/></g><rect x="10.1" y="9.2" width="3.2" height="3.2" rx="1.2" fill="#fff"/></svg>
<div class="t" style="left:365px;top:759px;font-size:13.2px">Start page</div>
<div class="a" style="left:431px;top:757px;width:17px;height:16px;background:#c8c8c8;border:1px solid #b4b4b4;border-radius:2px"></div>
<svg class="a" style="left:431px;top:757px" width="17" height="16" viewBox="0 0 17 16"><path d="M5 4.5 L12 11.5 M12 4.5 L5 11.5" stroke="#f4f4f4" stroke-width="2"/></svg>
<div class="a" style="left:462px;top:751px;width:163px;height:29px;background:#fff;border:1px solid #e4e4e4;border-top:none"></div>
<svg class="a" style="left:480px;top:756px" width="19" height="18" viewBox="0 0 19 18"><defs><linearGradient id="fr" x1="0" y1="0" x2="1" y2="1"><stop offset="0" stop-color="#f42a2a"/><stop offset="1" stop-color="#a80000"/></linearGradient></defs><path d="M0.2 0 H10 V3.5 H4.3 V5.9 H7.8 V10.6 H4.3 V17.6 H0.2Z" fill="url(#fr)" stroke="#8a0000" stroke-width="0.5"/><g transform="translate(11.7,10.8)" fill="#5a8bd0" stroke="#2b5699" stroke-width="0.5"><circle r="4.7"/><rect x="-1.4" y="-6.3" width="2.8" height="2.6" rx="0.4" transform="rotate(0)"/><rect x="-1.4" y="-6.3" width="2.8" height="2.6" rx="0.4" transform="rotate(45)"/><rect x="-1.4" y="-6.3" width="2.8" height="2.6" rx="0.4" transform="rotate(90)"/><rect x="-1.4" y="-6.3" width="2.8" height="2.6" rx="0.4" transform="rotate(135)"/><rect x="-1.4" y="-6.3" width="2.8" height="2.6" rx="0.4" transform="rotate(180)"/><rect x="-1.4" y="-6.3" width="2.8" height="2.6" rx="0.4" transform="rotate(225)"/><rect x="-1.4" y="-6.3" width="2.8" height="2.6" rx="0.4" transform="rotate(270)"/><rect x="-1.4" y="-6.3" width="2.8" height="2.6" rx="0.4" transform="rotate(315)"/><circle r="4.6" stroke="none"/></g><rect x="10.1" y="9.2" width="3.2" height="3.2" rx="1.2" fill="#fff"/></svg>
<div class="t" style="left:504px;top:760px;font-size:13.4px">Unnamed : 1*</div>
<div class="a" style="left:592px;top:758px;width:17px;height:16px;background:#e2744f;border:1px solid #d9452e;border-radius:2px"></div>
<svg class="a" style="left:592px;top:758px" width="17" height="16" viewBox="0 0 17 16"><path d="M5 4.5 L12 11.5 M12 4.5 L5 11.5" stroke="#fbe9e2" stroke-width="2"/></svg>
<!-- status right -->
<div class="a" style="left:1285px;top:784px;width:1px;height:30px;background:#dcdcdc"></div>
<div class="a" style="left:1385px;top:784px;width:1px;height:30px;background:#dcdcdc"></div>
<svg class="a" style="left:1302px;top:789px" width="20" height="20" viewBox="0 0 20 20"><path d="M15.6 4.6 Q9 2.2 4.2 6.2 M4.4 15 Q10 17.8 15.9 14.2" fill="none" stroke="#777" stroke-width="2.2" stroke-linecap="round"/><circle cx="15.6" cy="4.3" r="3.3" fill="#2b2f33"/><circle cx="4.4" cy="15.2" r="3.3" fill="#2b2f33"/></svg>
<div class="t" style="left:1323px;top:792px;font-size:13.4px;width:42px;overflow:hidden">Gesture</div>
<svg class="a" style="left:1366px;top:795px" width="9" height="6" viewBox="0 0 9 6"><path d="M0.5 0.5 H8.5 L4.5 5Z" fill="#111"/></svg>
<div class="t" style="left:1391px;top:792px;font-size:13.4px">115.25 mm x 54.88 mm</div>
<!-- title icon and window controls -->
<svg class="a" style="left:2px;top:5px" width="19" height="18" viewBox="0 0 19 18"><defs><linearGradient id="fr" x1="0" y1="0" x2="1" y2="1"><stop offset="0" stop-color="#f42a2a"/><stop offset="1" stop-color="#a80000"/></linearGradient></defs><path d="M0.2 0 H10 V3.5 H4.3 V5.9 H7.8 V10.6 H4.3 V17.6 H0.2Z" fill="url(#fr)" stroke="#8a0000" stroke-width="0.5"/><g transform="translate(11.7,10.8)" fill="#5a8bd0" stroke="#2b5699" stroke-width="0.5"><circle r="4.7"/><rect x="-1.4" y="-6.3" width="2.8" height="2.6" rx="0.4" transform="rotate(0)"/><rect x="-1.4" y="-6.3" width="2.8" height="2.6" rx="0.4" transform="rotate(45)"/><rect x="-1.4" y="-6.3" width="2.8" height="2.6" rx="0.4" transform="rotate(90)"/><rect x="-1.4" y="-6.3" width="2.8" height="2.6" rx="0.4" transform="rotate(135)"/><rect x="-1.4" y="-6.3" width="2.8" height="2.6" rx="0.4" transform="rotate(180)"/><rect x="-1.4" y="-6.3" width="2.8" height="2.6" rx="0.4" transform="rotate(225)"/><rect x="-1.4" y="-6.3" width="2.8" height="2.6" rx="0.4" transform="rotate(270)"/><rect x="-1.4" y="-6.3" width="2.8" height="2.6" rx="0.4" transform="rotate(315)"/><circle r="4.6" stroke="none"/></g><rect x="10.1" y="9.2" width="3.2" height="3.2" rx="1.2" fill="#fff"/></svg>
<svg class="a" style="left:1380px;top:5px" width="150" height="20" viewBox="0 0 150 20"><path d="M9 8.5 H21" stroke="#222" stroke-width="1"/><rect x="64.5" y="5.5" width="9" height="9" fill="none" stroke="#222"/><path d="M66.5 5.5 V2.5 H75.5 V11.5 H73.5" fill="none" stroke="#222"/><path d="M121 2.5 L133 14.5 M133 2.5 L121 14.5" stroke="#222" stroke-width="1.1"/></svg>
</body></html>
